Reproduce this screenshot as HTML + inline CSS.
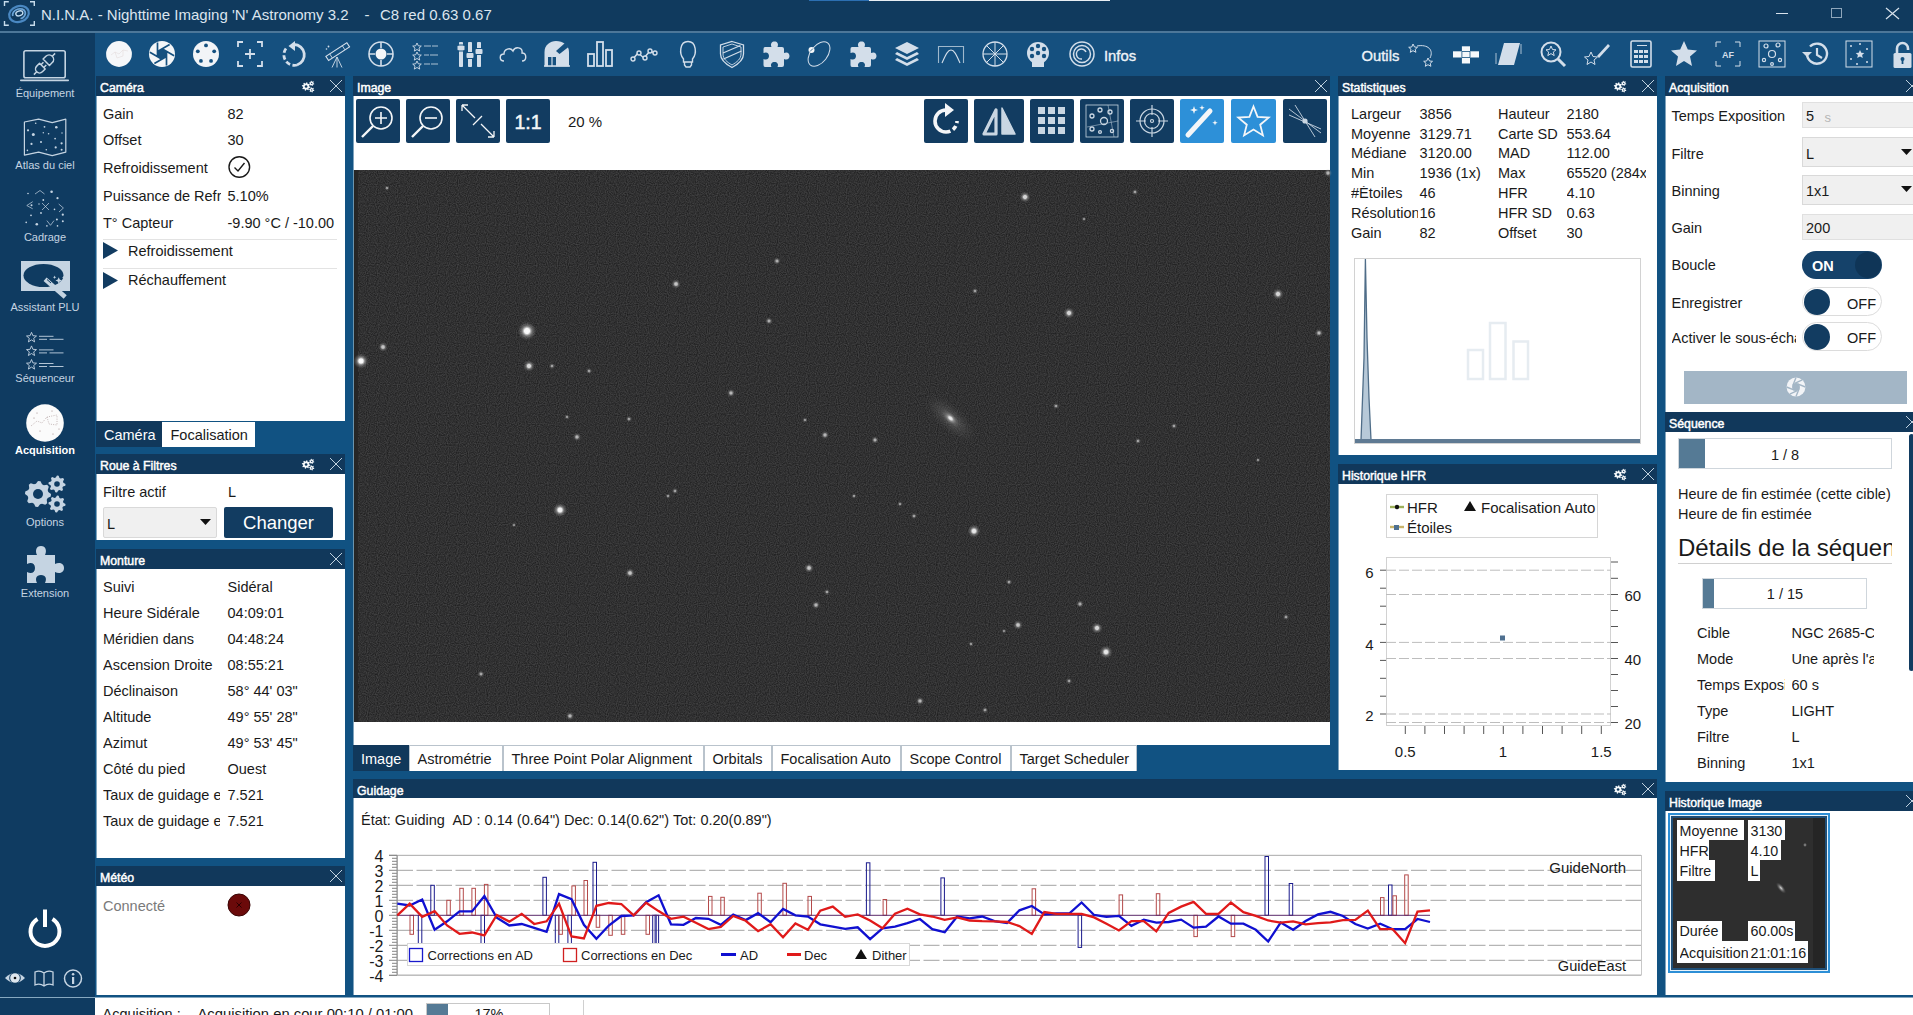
<!DOCTYPE html>
<html><head><meta charset="utf-8">
<style>
html,body{margin:0;padding:0;width:1913px;height:1015px;overflow:hidden;background:#115282;font-family:"Liberation Sans", sans-serif;}
.r{position:absolute;}
.t{position:absolute;white-space:nowrap;line-height:1;}
svg{position:absolute;overflow:visible;}
</style></head><body>
<div class="r" style="left:0px;top:0px;width:1913px;height:32px;background:#103a5e;"></div><div class="r" style="left:0px;top:31px;width:1913px;height:2px;background:#4d7799;"></div><div class="r" style="left:809px;top:0px;width:60px;height:1.2px;background:#2c6fb2;"></div><div class="r" style="left:869px;top:0px;width:241px;height:1.2px;background:#e8eef4;"></div><svg style="left:0px;top:0px" width="40" height="30" viewBox="0 0 40 30">
<path d="M4.5 6 V1.8 H8.8 M30 1.8 H34.3 V6 M34.3 21 V25.3 H30 M8.8 25.3 H4.5 V21" stroke="#c8dcec" stroke-width="1.4" fill="none"/>
<g transform="rotate(-18 19 14)" fill="none">
<ellipse cx="19" cy="14" rx="10" ry="7.8" stroke="#4a88c2" stroke-width="2.2"/>
<path d="M12.5 14 A6.5 5 0 1 1 19 19" stroke="#6aa3d6" stroke-width="1.8"/>
<ellipse cx="19.5" cy="13.5" rx="3.6" ry="2.4" stroke="#c5def2" stroke-width="1.3"/>
</g></svg><div class="t" style="left:41px;top:7.30px;font-size:15px;color:#dce5ee;">N.I.N.A. - Nighttime Imaging 'N' Astronomy 3.2</div><div class="t" style="left:364.5px;top:7.30px;font-size:15px;color:#dce5ee;">-</div><div class="t" style="left:380px;top:7.30px;font-size:15px;color:#dce5ee;">C8 red 0.63 0.67</div><div class="r" style="left:1776px;top:13px;width:12px;height:1px;background:#d8e2ec;"></div><div class="r" style="left:1831px;top:8px;width:11px;height:10px;background:transparent;border:1px solid #8fa6bb;box-sizing:border-box;"></div><svg style="left:1886px;top:8px" width="13" height="11"><path d="M0 0 L13 11 M13 0 L0 11" stroke="#d8e2ec" stroke-width="1.2"/></svg><div class="r" style="left:0px;top:33px;width:95px;height:982px;background:#0f3b61;"></div><svg style="left:20px;top:50px" width="50" height="33" viewBox="0 0 50 33">
<rect x="3.9" y="0.8" width="41.3" height="27" rx="1.8" fill="none" stroke="#c5d4e2" stroke-width="1.6"/>
<rect x="0" y="29.6" width="49" height="1.7" rx="0.8" fill="#c5d4e2"/>
<g transform="translate(24.5 14) rotate(-45)" stroke="#c5d4e2" stroke-width="1.5" fill="none" stroke-linejoin="round">
<path d="M-15 0 H-11 M11 0 H15 M-3 -2 H0.5 M-3 2 H0.5"/>
<path d="M-3 -4 H-7 A4 4 0 0 0 -7 4 H-3 Z"/><path d="M2.5 -4.5 H6.5 A4.5 4.5 0 0 1 6.5 4.5 H2.5 Z"/>
</g></svg><div class="t" style="left:-155px;width:400px;text-align:center;top:88.19px;font-size:11px;color:#c5d4e2;">Équipement</div><svg style="left:15px;top:112px" width="60" height="120" viewBox="0 0 60 120">
<path d="M9.4 10 L23.6 7.1 L37.2 10.6 L50.8 7.1 V40.1 L37.2 43.7 L23.6 40.1 L9.4 43.1 Z" fill="none" stroke="#c5d4e2" stroke-width="1.2" stroke-linejoin="round"/><circle cx="18.3" cy="22.4" r="1.5" fill="#c5d4e2"/><circle cx="41.3" cy="15.3" r="1.3" fill="#c5d4e2"/><circle cx="13" cy="18.3" r="1.1" fill="#c5d4e2"/><circle cx="16.5" cy="31.9" r="1.1" fill="#c5d4e2"/><circle cx="46.6" cy="31.3" r="1.1" fill="#c5d4e2"/><circle cx="40.7" cy="35.4" r="1.1" fill="#c5d4e2"/><circle cx="29.5" cy="14.8" r="0.9" fill="#c5d4e2"/><circle cx="33.6" cy="21.8" r="0.8" fill="#c5d4e2"/><circle cx="26" cy="30.1" r="1.0" fill="#c5d4e2"/><circle cx="31.3" cy="37.8" r="0.8" fill="#c5d4e2"/><circle cx="46.6" cy="37.8" r="1.0" fill="#c5d4e2"/><circle cx="20.7" cy="11.2" r="0.8" fill="#c5d4e2"/><circle cx="12.4" cy="38.4" r="0.8" fill="#c5d4e2"/><circle cx="40.1" cy="26.6" r="0.9" fill="#c5d4e2"/><circle cx="28.3" cy="20.7" r="0.7" fill="#c5d4e2"/><circle cx="47" cy="21" r="0.7" fill="#c5d4e2"/>
<circle cx="36.6" cy="79.7" r="1.3" fill="#c5d4e2"/><circle cx="42.5" cy="86.2" r="1.1" fill="#c5d4e2"/><circle cx="28.3" cy="88" r="0.9" fill="#c5d4e2"/><circle cx="16.5" cy="93.3" r="1.0" fill="#c5d4e2"/><circle cx="39.5" cy="97.4" r="0.8" fill="#c5d4e2"/><circle cx="26" cy="101" r="0.9" fill="#c5d4e2"/><circle cx="47.8" cy="102.7" r="1.1" fill="#c5d4e2"/><circle cx="16" cy="103.3" r="0.9" fill="#c5d4e2"/><circle cx="41.9" cy="107.4" r="1.0" fill="#c5d4e2"/><circle cx="47.8" cy="109.2" r="1.0" fill="#c5d4e2"/><circle cx="11.2" cy="110.4" r="0.8" fill="#c5d4e2"/><circle cx="21.8" cy="112.2" r="1.3" fill="#c5d4e2"/><circle cx="31.9" cy="113.9" r="0.8" fill="#c5d4e2"/><circle cx="42.5" cy="113.9" r="0.8" fill="#c5d4e2"/><circle cx="13" cy="81.5" r="0.8" fill="#c5d4e2"/><circle cx="24" cy="92" r="0.7" fill="#c5d4e2"/>
<path d="M20 82 L25 78.5 L29.5 82 M17.7 89.7 L11.8 93.5 L17.7 96.8 M27 91 L34 98 M34 91 L27 98 M43.7 92 L48.4 96 L44 100 M31.9 108.6 L35.5 113.3 L39 108.6" fill="none" stroke="#c5d4e2" stroke-width="0.7"/>
</svg><div class="t" style="left:-155px;width:400px;text-align:center;top:160.19px;font-size:11px;color:#c5d4e2;">Atlas du ciel</div><div class="t" style="left:-155px;width:400px;text-align:center;top:231.69px;font-size:11px;color:#c5d4e2;">Cadrage</div><svg style="left:21px;top:261px" width="50" height="40" viewBox="0 0 50 40">
<rect x="0" y="0" width="49" height="30" fill="#c5d4e2"/>
<ellipse cx="22.5" cy="14.5" rx="20" ry="11.5" fill="#0f3b61"/>
<path d="M24.1 18.2 L44.2 35.9" stroke="#c5d4e2" stroke-width="4.6"/><path d="M26 18.5 L30 22" stroke="#0f3b61" stroke-width="1"/>
<path d="M37.7 16.2 l1 2.2 l2.2 1 l-2.2 1 l-1 2.2 l-1 -2.2 l-2.2 -1 l2.2 -1 z M43 14.4 l0.6 1.4 l1.4 0.6 l-1.4 0.6 l-0.6 1.4 l-0.6 -1.4 l-1.4 -0.6 l1.4 -0.6z M33.6 14.6 l0.5 1.2 l1.2 0.5 l-1.2 0.5 l-0.5 1.2 l-0.5 -1.2 l-1.2 -0.5 l1.2 -0.5z" fill="#c5d4e2"/>
</svg><div class="t" style="left:-155px;width:400px;text-align:center;top:302.19px;font-size:11px;color:#c5d4e2;">Assistant PLU</div><svg style="left:26px;top:332px" width="40" height="40" viewBox="0 0 40 40"><polygon points="5.5,0.3 6.9,3.7 10.5,4.0 7.7,6.3 8.6,9.9 5.5,7.9 2.4,9.9 3.3,6.3 0.5,4.0 4.1,3.7" fill="none" stroke="#c5d4e2" stroke-width="0.9" stroke-linejoin="round"/><path d="M13 4.3 H27.5 M13 7.3 H21 M23.5 7.3 H37.5" stroke="#c5d4e2" stroke-width="0.9"/><polygon points="5.5,13.9 6.9,17.3 10.5,17.6 7.7,19.9 8.6,23.5 5.5,21.5 2.4,23.5 3.3,19.9 0.5,17.6 4.1,17.3" fill="none" stroke="#c5d4e2" stroke-width="0.9" stroke-linejoin="round"/><path d="M13 17.9 H27.5 M13 20.9 H21 M23.5 20.9 H37.5" stroke="#c5d4e2" stroke-width="0.9"/><polygon points="5.5,27.5 6.9,30.9 10.5,31.2 7.7,33.5 8.6,37.1 5.5,35.1 2.4,37.1 3.3,33.5 0.5,31.2 4.1,30.9" fill="none" stroke="#c5d4e2" stroke-width="0.9" stroke-linejoin="round"/><path d="M13 31.5 H27.5 M13 34.5 H21 M23.5 34.5 H37.5" stroke="#c5d4e2" stroke-width="0.9"/></svg><div class="t" style="left:-155px;width:400px;text-align:center;top:372.69px;font-size:11px;color:#c5d4e2;">Séquenceur</div><svg style="left:26px;top:404px" width="38" height="38" viewBox="0 0 38 38">
<circle cx="19" cy="19" r="18.8" fill="#fbfbfb"/>
<path d="M5 22 L11 17 L16 19 L21 13 L31 11 M21 13 L23 20 L31 21 L31 11" stroke="#a08a8a" stroke-width="0.6" stroke-dasharray="1 1.3" fill="none"/><g fill="#8a7070"><circle cx="11" cy="9" r="0.5"/><circle cx="26" cy="7" r="0.5"/><circle cx="14" cy="27" r="0.5"/><circle cx="27" cy="30" r="0.5"/><circle cx="33" cy="25" r="0.5"/><circle cx="8" cy="14" r="0.5"/></g>
</svg><div class="t" style="left:-155px;width:400px;text-align:center;top:445.19px;font-size:11px;color:#ffffff;font-weight:bold;">Acquisition</div><svg style="left:24px;top:474px" width="44" height="40" viewBox="0 0 44 40"><polygon points="27.00,20.00 26.75,22.54 23.70,24.02 22.73,25.83 23.19,29.19 21.22,30.81 18.02,29.70 16.05,30.30 14.00,33.00 11.46,32.75 9.98,29.70 8.17,28.73 4.81,29.19 3.19,27.22 4.30,24.02 3.70,22.05 1.00,20.00 1.25,17.46 4.30,15.98 5.27,14.17 4.81,10.81 6.78,9.19 9.98,10.30 11.95,9.70 14.00,7.00 16.54,7.25 18.02,10.30 19.83,11.27 23.19,10.81 24.81,12.78 23.70,15.98 24.30,17.95" fill="#c5d4e2"/><circle cx="14" cy="20" r="5" fill="#0f3b61"/><polygon points="41.50,10.00 41.34,11.66 39.01,12.49 38.40,13.61 39.01,16.01 37.72,17.07 35.49,16.01 34.27,16.38 33.00,18.50 31.34,18.34 30.51,16.01 29.39,15.40 26.99,16.01 25.93,14.72 26.99,12.49 26.62,11.27 24.50,10.00 24.66,8.34 26.99,7.51 27.60,6.39 26.99,3.99 28.28,2.93 30.51,3.99 31.73,3.62 33.00,1.50 34.66,1.66 35.49,3.99 36.61,4.60 39.01,3.99 40.07,5.28 39.01,7.51 39.38,8.73" fill="#c5d4e2"/><circle cx="33" cy="10" r="2.8" fill="#0f3b61"/><polygon points="41.50,30.00 41.34,31.66 39.01,32.49 38.40,33.61 39.01,36.01 37.72,37.07 35.49,36.01 34.27,36.38 33.00,38.50 31.34,38.34 30.51,36.01 29.39,35.40 26.99,36.01 25.93,34.72 26.99,32.49 26.62,31.27 24.50,30.00 24.66,28.34 26.99,27.51 27.60,26.39 26.99,23.99 28.28,22.93 30.51,23.99 31.73,23.62 33.00,21.50 34.66,21.66 35.49,23.99 36.61,24.60 39.01,23.99 40.07,25.28 39.01,27.51 39.38,28.73" fill="#c5d4e2"/><circle cx="33" cy="30" r="2.8" fill="#0f3b61"/></svg><div class="t" style="left:-155px;width:400px;text-align:center;top:517.19px;font-size:11px;color:#c5d4e2;">Options</div><svg style="left:25px;top:546px" width="40" height="38" viewBox="0 0 40 38">
<path d="M2 9 H12 C10 5 11 0 16 0 C21 0 22 5 20 9 H30 V18 C34 16 39 17 39 22 C39 27 34 28 30 26 V37 H20 C22 33 21 29 16 29 C11 29 10 33 12 37 H2 V26 C6 28 10 27 10 22 C10 17 6 16 2 18 Z" fill="#c5d4e2"/>
</svg><div class="t" style="left:-155px;width:400px;text-align:center;top:588.19px;font-size:11px;color:#c5d4e2;">Extension</div><svg style="left:26px;top:908px" width="38" height="40" viewBox="0 0 38 40">
<path d="M11.5 11 A14.5 14.5 0 1 0 26.5 11" stroke="#ffffff" stroke-width="4" fill="none"/>
<path d="M19 1.5 V19" stroke="#ffffff" stroke-width="4"/></svg><svg style="left:5px;top:969px" width="80" height="20" viewBox="0 0 80 20">
<path d="M0 9 Q10 -1 20 9 Q10 19 0 9 Z" fill="#c5d4e2"/><circle cx="10" cy="9" r="5.8" fill="#0f3b61"/><circle cx="10" cy="9" r="4.8" fill="#dde6ee"/><circle cx="10" cy="9" r="1.3" fill="#111"/>
<path d="M30 3 Q35 1 39 4 Q43 1 48 3 V16 Q43 14 39 17 Q35 14 30 16 Z M39 4 V17" stroke="#c5d4e2" stroke-width="1.3" fill="none"/>
<circle cx="68" cy="9.5" r="8.5" stroke="#c5d4e2" stroke-width="1.5" fill="none"/><rect x="67" y="8" width="2.2" height="7" fill="#c5d4e2"/><circle cx="68.1" cy="5.3" r="1.3" fill="#c5d4e2"/>
</svg><div class="r" style="left:95px;top:33px;width:1818px;height:43px;background:#15507f;"></div><svg style="left:104.5px;top:39.5px" width="28" height="28" viewBox="0 0 28 28"><circle cx="14" cy="14" r="12.9" fill="#f6f7f9"/><path d="M6 15 L10 12 L14 14 L18 10 L23 11 M10 12 L12 18 L18 16 L18 10" stroke="#e0d6d6" stroke-width="0.5" fill="none"/></svg><svg style="left:148.3px;top:39.5px" width="28" height="28" viewBox="0 0 28 28"><clipPath id="apc"><circle cx="14" cy="14" r="13"/></clipPath><circle cx="14" cy="14" r="13" fill="#f4f6f8"/><polygon points="14.00,8.80 18.50,11.40 18.50,16.60 14.00,19.20 9.50,16.60 9.50,11.40" fill="#15507f"/><path d="M14.00 8.80 L26.12 15.80 M18.50 11.40 L18.50 25.40 M18.50 16.60 L6.38 23.60 M14.00 19.20 L1.88 12.20 M9.50 16.60 L9.50 2.60 M9.50 11.40 L21.62 4.40 " stroke="#15507f" stroke-width="1.7" clip-path="url(#apc)"/></svg><svg style="left:192.1px;top:39.5px" width="28" height="28" viewBox="0 0 28 28"><circle cx="14" cy="14" r="13" fill="#f2f4f7"/><circle cx="14.00" cy="5.40" r="1.9" fill="#15507f"/><circle cx="22.18" cy="11.34" r="1.9" fill="#15507f"/><circle cx="19.05" cy="20.96" r="1.9" fill="#15507f"/><circle cx="8.95" cy="20.96" r="1.9" fill="#15507f"/><circle cx="5.82" cy="11.34" r="1.9" fill="#15507f"/></svg><svg style="left:235.9px;top:39.5px" width="28" height="28" viewBox="0 0 28 28"><path d="M2 7 V2 H7 M21 2 H26 V7 M26 21 V26 H21 M7 26 H2 V21 M14 9 V19 M9 14 H19" stroke="#d3deea" stroke-width="1.8" fill="none"/></svg><svg style="left:279.7px;top:39.5px" width="28" height="28" viewBox="0 0 28 28"><path d="M14 4.5 A10.5 10.5 0 0 1 17 25" stroke="#d3deea" stroke-width="2.8" fill="none"/><path d="M17 25 A10.5 10.5 0 0 1 6 8.5" stroke="#d3deea" stroke-width="2.8" fill="none" stroke-dasharray="4.6 2.4"/><path d="M15 1 L8.5 6 L15 11 Z" fill="#d3deea"/></svg><svg style="left:323.5px;top:39.5px" width="28" height="28" viewBox="0 0 28 28"><g transform="rotate(-33 14 12)"><rect x="1.5" y="9" width="25" height="5" stroke="#d3deea" stroke-width="1.1" fill="none"/><path d="M21 9 V14 M6 9 V14" stroke="#d3deea" stroke-width="0.8"/></g><path d="M13 17 L8 27.5 M13 17 L13 27.5 M13 17 L18 27.5" stroke="#d3deea" stroke-width="0.9"/><circle cx="2.5" cy="9" r="0.8" fill="#d3deea"/><circle cx="4.5" cy="6.5" r="0.9" fill="#d3deea"/></svg><svg style="left:367.3px;top:39.5px" width="28" height="28" viewBox="0 0 28 28"><circle cx="14" cy="14" r="12" stroke="#d3deea" stroke-width="1.6" fill="none"/><circle cx="14" cy="14" r="5.5" fill="#f4f6f8"/><path d="M2 14 H8 M20 14 H26 M14 2 V8 M14 20 V26" stroke="#d3deea" stroke-width="1.6"/></svg><svg style="left:411.1px;top:39.5px" width="28" height="28" viewBox="0 0 28 28"><g stroke="#d3deea" stroke-width="0.9" fill="none"><path d="M5 2 l1.3 2.8 l3 .3 l-2.3 2 l.7 3 l-2.7 -1.6 l-2.7 1.6 l.7 -3 l-2.3 -2 l3 -.3z" transform="translate(1,1)"/><path d="M5 2 l1.3 2.8 l3 .3 l-2.3 2 l.7 3 l-2.7 -1.6 l-2.7 1.6 l.7 -3 l-2.3 -2 l3 -.3z" transform="translate(1,10)"/><path d="M5 2 l1.3 2.8 l3 .3 l-2.3 2 l.7 3 l-2.7 -1.6 l-2.7 1.6 l.7 -3 l-2.3 -2 l3 -.3z" transform="translate(1,19)"/><path d="M13 6 H20 M21 6 H27 M13 15 H18 M19 15 H27 M13 24 H19 M20 24 H27" stroke-width="0.8"/></g></svg><svg style="left:454.9px;top:39.5px" width="28" height="28" viewBox="0 0 28 28"><g fill="#d3deea"><rect x="4" y="2" width="4" height="25" rx="0.8"/><rect x="13" y="2" width="4" height="25" rx="0.8"/><rect x="22" y="2" width="4" height="25" rx="0.8"/><rect x="2.5" y="5.5" width="7" height="5" rx="1"/><rect x="11.5" y="13" width="7" height="5" rx="1"/><rect x="20.5" y="9" width="7" height="5" rx="1"/></g><g fill="#15507f"><rect x="2" y="4.5" width="8" height="1"/><rect x="11" y="12" width="8" height="1"/><rect x="20" y="8" width="8" height="1"/><rect x="2" y="10.5" width="8" height="1"/><rect x="11" y="18" width="8" height="1"/><rect x="20" y="14" width="8" height="1"/></g></svg><svg style="left:498.7px;top:39.5px" width="28" height="28" viewBox="0 0 28 28"><path d="M5 21 C0 21 0 14 5 14 C5 9 11 7 14 11 C16 6 24 7 23 13 C28 13 28 21 23 21" stroke="#d3deea" stroke-width="1.4" fill="none"/></svg><svg style="left:542.5px;top:39.5px" width="28" height="28" viewBox="0 0 28 28"><path d="M1.5 26.5 V12 C1.5 5 7 1 13 1 C20 1 26 5 26 12 V26.5 Z" fill="#d3deea"/><path d="M13 11 L22 3 L25.5 7 L16.5 14 Z" fill="#15507f"/><path d="M5 26.5 V17 H13 V26.5" fill="#15507f"/><path d="M9 17 V26.5" stroke="#d3deea" stroke-width="1.2"/><path d="M1 26 H27" stroke="#d3deea" stroke-width="1.5"/></svg><svg style="left:586.3px;top:39.5px" width="28" height="28" viewBox="0 0 28 28"><g stroke="#d3deea" stroke-width="1.8" fill="none"><rect x="2" y="14" width="6" height="12"/><rect x="11" y="2" width="6" height="24"/><rect x="20" y="10" width="6" height="16"/></g></svg><svg style="left:630.1px;top:39.5px" width="28" height="28" viewBox="0 0 28 28"><path d="M2 20 L8 13 L14 18 L20 11 L26 14" stroke="#d3deea" stroke-width="1.5" fill="none"/><g fill="#15507f" stroke="#d3deea" stroke-width="1.4"><circle cx="3" cy="19" r="2"/><circle cx="9" cy="13" r="2"/><circle cx="15" cy="18" r="2"/><circle cx="20" cy="11" r="2"/><circle cx="25" cy="13" r="2"/></g></svg><svg style="left:673.9px;top:39.5px" width="28" height="28" viewBox="0 0 28 28"><path d="M9.5 19 C5 14 5.5 1.5 14 1.5 C22.5 1.5 23 14 18.5 19 V22 H9.5 Z M9.5 22 H18.5 M10.5 22 V25 L12 27 H16 L17.5 25 V22" stroke="#d3deea" stroke-width="1.4" fill="none"/></svg><svg style="left:717.7px;top:39.5px" width="28" height="28" viewBox="0 0 28 28"><path d="M14 1.5 L25.5 5 V14 C25.5 20 20.5 24 14 27.5 C7.5 24 2.5 20 2.5 14 V5 Z" stroke="#d3deea" stroke-width="1.3" fill="none"/><path d="M14 4 L23 7 V14 C23 19 19 22 14 25 C9 22 5 19 5 14 V7 Z" stroke="#d3deea" stroke-width="0.9" fill="none"/><path d="M5 13 L22.5 5.5 M5.5 19 L23.5 11" stroke="#d3deea" stroke-width="1.2"/></svg><svg style="left:761.5px;top:39.5px" width="28" height="28" viewBox="0 0 28 28"><path d="M3 7 H9.5 C8 3.5 10 1.5 12.5 1.5 C15 1.5 17 3.5 15.5 7 H20 Q22 7 22 9 V13 C25.5 11.5 27.5 13.5 27.5 16 C27.5 18.5 25.5 20.5 22 19 V25 Q22 27 20 27 H15.5 C17 24 15 22 12.5 22 C10 22 8 24 9.5 27 H3 Q1.5 27 1.5 25 V19 C5 20.5 7 18.5 7 16 C7 13.5 5 11.5 1.5 13 V9 Q1.5 7 3 7 Z" fill="#d3deea"/></svg><svg style="left:805.3px;top:39.5px" width="28" height="28" viewBox="0 0 28 28"><ellipse cx="14" cy="14" rx="14" ry="8.5" stroke="#d3deea" stroke-width="1" fill="none" transform="rotate(-52 14 14)"/><circle cx="6.5" cy="10" r="3" fill="#f4f6f8"/><path d="M5 11.5 L8 8.5" stroke="#15507f" stroke-width="0.8"/></svg><svg style="left:849.1px;top:39.5px" width="28" height="28" viewBox="0 0 28 28"><path d="M3 7 H9.5 C8 3.5 10 1.5 12.5 1.5 C15 1.5 17 3.5 15.5 7 H20 Q22 7 22 9 V13 C25.5 11.5 27.5 13.5 27.5 16 C27.5 18.5 25.5 20.5 22 19 V25 Q22 27 20 27 H15.5 C17 24 15 22 12.5 22 C10 22 8 24 9.5 27 H3 Q1.5 27 1.5 25 V19 C5 20.5 7 18.5 7 16 C7 13.5 5 11.5 1.5 13 V9 Q1.5 7 3 7 Z" fill="#d3deea"/></svg><svg style="left:892.9px;top:39.5px" width="28" height="28" viewBox="0 0 28 28"><g fill="#d3deea"><path d="M14 2 L26 8 L14 14 L2 8 Z"/><path d="M4 12 L14 17 L24 12 L26 14 L14 20 L2 14 Z"/><path d="M4 18 L14 23 L24 18 L26 20 L14 26 L2 20 Z"/></g></svg><svg style="left:936.7px;top:39.5px" width="28" height="28" viewBox="0 0 28 28"><path d="M1.5 23 V6.5 H26.5 V23" stroke="#9fb8cc" stroke-width="1.1" fill="none"/><path d="M5 23 C9 14 11 10 14 10 C17 10 19 14 23 23" stroke="#d3deea" stroke-width="1.1" fill="none"/></svg><svg style="left:980.5px;top:39.5px" width="28" height="28" viewBox="0 0 28 28"><circle cx="14" cy="14" r="12" stroke="#d3deea" stroke-width="1.3" fill="none"/><path d="M14 2 V26 M2 14 H26 M5.5 5.5 L22.5 22.5 M22.5 5.5 L5.5 22.5" stroke="#d3deea" stroke-width="1"/></svg><svg style="left:1024.3px;top:39.5px" width="28" height="28" viewBox="0 0 28 28"><circle cx="14" cy="13" r="11" fill="#d3deea"/><rect x="8" y="20" width="12" height="7" fill="#d3deea"/><g fill="#15507f"><circle cx="14" cy="6" r="2.2"/><circle cx="20" cy="9" r="2.2"/><circle cx="20" cy="16" r="2.2"/><circle cx="8" cy="9" r="2.2"/><circle cx="8" cy="16" r="2.2"/><circle cx="14" cy="13" r="2.2"/></g></svg><svg style="left:1068.1px;top:39.5px" width="28" height="28" viewBox="0 0 28 28"><g stroke="#d3deea" stroke-width="1.5" fill="none"><circle cx="14" cy="14" r="12"/><circle cx="14" cy="14" r="8.5"/><path d="M14 19 A5 5 0 1 1 18 12"/></g></svg><svg style="left:1408.0px;top:39.5px" width="28" height="28" viewBox="0 0 28 28"><g stroke="#d3deea" stroke-width="1" fill="none"><path d="M4 3 l1.5 3 l3 .3 l-2.3 2 l.7 3 l-2.9 -1.6 l-2.7 1.6 l.7 -3 l-2.3 -2 l3 -.3z" transform="translate(1,1)"/><path d="M20 18 l1.5 3 l3 .3 l-2.3 2 l.7 3 l-2.9 -1.6 l-2.7 1.6 l.7 -3 l-2.3 -2 l3 -.3z"/><path d="M9 6 C20 4 26 10 22 18"/></g></svg><svg style="left:1451.7px;top:39.5px" width="28" height="28" viewBox="0 0 28 28"><g fill="#f6f8fa"><rect x="9.9" y="6.3" width="8.1" height="17.2"/><rect x="1" y="11.3" width="26" height="6.2"/></g><g fill="#15507f"><rect x="9.9" y="11" width="8.1" height="0.8"/><rect x="9.9" y="17.2" width="8.1" height="0.8"/><rect x="9.5" y="11.3" width="0.8" height="6.2"/><rect x="17.6" y="11.3" width="0.8" height="6.2"/></g></svg><svg style="left:1495.4px;top:39.5px" width="28" height="28" viewBox="0 0 28 28"><path d="M9 3 H25 L19 25 H3 Z" fill="#d3deea"/><path d="M1 13 V24 M26 4 V14" stroke="#d3deea" stroke-width="0.8"/></svg><svg style="left:1539.1px;top:39.5px" width="28" height="28" viewBox="0 0 28 28"><circle cx="12" cy="12" r="9.5" stroke="#d3deea" stroke-width="2" fill="none"/><path d="M19 19 L26 26" stroke="#d3deea" stroke-width="3"/><path d="M12 6 l1.5 3.5 l3.5 .3 l-2.7 2.3 l.9 3.5 l-3.2 -2 l-3.2 2 l.9 -3.5 l-2.7 -2.3 l3.5 -.3z" stroke="#d3deea" stroke-width="1" fill="none"/></svg><svg style="left:1582.8px;top:39.5px" width="28" height="28" viewBox="0 0 28 28"><path d="M14 16 L25 4 L27 6 L16 18 Z" fill="#d3deea"/><path d="M8 12 l2 4.5 l4.5 .5 l-3.5 3 l1 4.5 l-4 -2.5 l-4 2.5 l1 -4.5 l-3.5 -3 l4.5 -.5z" stroke="#d3deea" stroke-width="1" fill="none"/></svg><svg style="left:1626.5px;top:39.5px" width="28" height="28" viewBox="0 0 28 28"><rect x="4" y="1" width="20" height="26" rx="1.5" stroke="#d3deea" stroke-width="1.6" fill="none"/><g fill="#d3deea"><rect x="7" y="10" width="4" height="3"/><rect x="12" y="10" width="4" height="3"/><rect x="17" y="10" width="4" height="3"/><rect x="7" y="15" width="4" height="3"/><rect x="12" y="15" width="4" height="3"/><rect x="17" y="15" width="4" height="3"/><rect x="7" y="20" width="4" height="3"/><rect x="12" y="20" width="4" height="3"/><rect x="17" y="20" width="4" height="3"/><rect x="10" y="5" width="10" height="1"/></g></svg><svg style="left:1670.2px;top:39.5px" width="28" height="28" viewBox="0 0 28 28"><path d="M14 1 L17.8 9.5 L27 10.5 L20 16.5 L22 26 L14 21 L6 26 L8 16.5 L1 10.5 L10.2 9.5 Z" fill="#d3deea"/></svg><svg style="left:1713.9px;top:39.5px" width="28" height="28" viewBox="0 0 28 28"><path d="M2 7 V2 H7 M21 2 H26 V7 M26 21 V26 H21 M7 26 H2 V21" stroke="#d3deea" stroke-width="1" fill="none"/><text x="14" y="17.5" font-size="9" font-weight="bold" text-anchor="middle" fill="#d3deea" font-family="Liberation Sans">AF</text></svg><svg style="left:1757.6px;top:39.5px" width="28" height="28" viewBox="0 0 28 28"><rect x="1" y="1" width="26" height="26" stroke="#d3deea" stroke-width="1" fill="none"/><g stroke="#d3deea" stroke-width="1.2" fill="none"><circle cx="14" cy="14" r="3.5"/><circle cx="8" cy="6" r="2"/><circle cx="20" cy="5" r="2"/><circle cx="22" cy="20" r="1.6"/><circle cx="6" cy="20" r="1.6"/><circle cx="14" cy="24" r="1.4"/></g></svg><svg style="left:1801.3px;top:39.5px" width="28" height="28" viewBox="0 0 28 28"><path d="M6 14 A10 10 0 1 0 9 6.5" stroke="#d3deea" stroke-width="2.4" fill="none"/><path d="M1 12 L6 17 L11 12 Z" fill="#d3deea"/><path d="M16 8 V15 L21 18" stroke="#d3deea" stroke-width="2.2" fill="none"/></svg><svg style="left:1845.0px;top:39.5px" width="28" height="28" viewBox="0 0 28 28"><rect x="1" y="1" width="26" height="26" stroke="#d3deea" stroke-width="1" fill="none"/><g fill="#d3deea"><circle cx="6" cy="6" r="1"/><circle cx="15" cy="4" r="1"/><circle cx="22" cy="9" r="1"/><circle cx="6" cy="19" r="1"/><circle cx="12" cy="24" r="1"/><circle cx="22" cy="22" r="1"/><path d="M15 10 l1.3 2.7 l3 .3 l-2.2 2 l.7 3 l-2.8 -1.6 l-2.8 1.6 l.7 -3 l-2.2 -2 l3 -.3z"/></g></svg><svg style="left:1888.7px;top:39.5px" width="28" height="28" viewBox="0 0 28 28"><path d="M8 13 V8.5 A5.5 5.5 0 0 1 19 8.5 V10" stroke="#d3deea" stroke-width="2.6" fill="none"/><rect x="4.5" y="13" width="18" height="15" rx="1.5" fill="#d3deea"/><circle cx="13.5" cy="19" r="2" fill="#15507f"/><rect x="12.6" y="19" width="1.8" height="5" fill="#15507f"/></svg><div class="t" style="left:1104px;top:48.97px;font-size:14.8px;color:#eef3f8;-webkit-text-stroke:0.35px #eef3f8;">Infos</div><div class="t" style="left:1361.5px;top:48.97px;font-size:14.8px;color:#eef3f8;-webkit-text-stroke:0.35px #eef3f8;">Outils</div><div class="r" style="left:96px;top:76px;width:249px;height:20px;background:#11385b;"></div><div class="t" style="left:100px;top:81.79px;font-size:12.3px;color:#ffffff;-webkit-text-stroke:0.45px #ffffff;">Caméra</div><svg style="left:329.8px;top:80.2px" width="12" height="12"><path d="M0 0 L12 12 M12 0 L0 12" stroke="#c9d9e7" stroke-width="0.95"/></svg><svg style="left:301px;top:81px" width="14" height="12" viewBox="0 0 14 12"><polygon points="9.38,5.92 9.21,6.75 7.83,6.96 7.50,7.47 7.83,8.82 7.13,9.29 6.00,8.47 5.40,8.59 4.68,9.78 3.85,9.61 3.64,8.23 3.13,7.90 1.78,8.23 1.31,7.53 2.13,6.40 2.01,5.80 0.82,5.08 0.99,4.25 2.37,4.04 2.70,3.53 2.37,2.18 3.07,1.71 4.20,2.53 4.80,2.41 5.52,1.22 6.35,1.39 6.56,2.77 7.07,3.10 8.42,2.77 8.89,3.47 8.07,4.60 8.19,5.20" fill="#f4f8fb"/><circle cx="5.1" cy="5.5" r="1.3" fill="#11385b"/><polygon points="13.28,2.74 13.10,3.39 12.13,3.50 11.80,3.83 11.69,4.80 11.04,4.98 10.47,4.18 10.01,4.06 9.12,4.46 8.64,3.98 9.04,3.09 8.92,2.63 8.12,2.06 8.30,1.41 9.27,1.30 9.60,0.97 9.71,-0.00 10.36,-0.18 10.93,0.62 11.39,0.74 12.28,0.34 12.76,0.82 12.36,1.71 12.48,2.17" fill="#f4f8fb"/><circle cx="10.7" cy="2.4" r="0.6" fill="#11385b"/><polygon points="13.28,9.24 13.10,9.89 12.13,10.00 11.80,10.33 11.69,11.30 11.04,11.48 10.47,10.68 10.01,10.56 9.12,10.96 8.64,10.48 9.04,9.59 8.92,9.13 8.12,8.56 8.30,7.91 9.27,7.80 9.60,7.47 9.71,6.50 10.36,6.32 10.93,7.12 11.39,7.24 12.28,6.84 12.76,7.32 12.36,8.21 12.48,8.67" fill="#f4f8fb"/><circle cx="10.7" cy="8.9" r="0.6" fill="#11385b"/></svg><div class="r" style="left:96px;top:96px;width:249px;height:325px;background:#ffffff;"></div><div class="r" style="left:96px;top:96px;width:1px;height:325px;background:#7fa3bd;"></div><div class="t" style="left:103px;top:106.73px;font-size:14.5px;color:#1a1a1a;">Gain</div><div class="t" style="left:227.5px;top:106.73px;font-size:14.5px;color:#1a1a1a;">82</div><div class="t" style="left:103px;top:132.73px;font-size:14.5px;color:#1a1a1a;">Offset</div><div class="t" style="left:227.5px;top:132.73px;font-size:14.5px;color:#1a1a1a;">30</div><div class="t" style="left:103px;top:161.33px;font-size:14.5px;color:#1a1a1a;">Refroidissement</div><svg style="left:228px;top:156px" width="23" height="23"><circle cx="11.3" cy="11" r="10.3" stroke="#1a1a1a" stroke-width="1.4" fill="none"/><path d="M6.5 11.5 L10 15 L16.5 7" stroke="#1a1a1a" stroke-width="1.4" fill="none"/></svg><div class="t" style="left:103px;top:189.43px;font-size:14.5px;color:#1a1a1a;width:118px;overflow:hidden;padding-bottom:4px;">Puissance de Refroidissement</div><div class="t" style="left:227.5px;top:189.43px;font-size:14.5px;color:#1a1a1a;">5.10%</div><div class="t" style="left:103px;top:216.03px;font-size:14.5px;color:#1a1a1a;">T° Capteur</div><div class="t" style="left:227.5px;top:216.03px;font-size:14.5px;color:#1a1a1a;">-9.90 °C / -10.00</div><div class="r" style="left:103px;top:239px;width:234px;height:1px;background:#e3e3e3;"></div><div class="r" style="left:103px;top:268px;width:234px;height:1px;background:#e3e3e3;"></div><svg style="left:103px;top:242px" width="16" height="48"><path d="M0 0 L15 8.5 L0 17 Z M0 30 L15 38.5 L0 47 Z" fill="#123c61"/></svg><div class="t" style="left:128px;top:244.13px;font-size:14.5px;color:#1a1a1a;">Refroidissement</div><div class="t" style="left:128px;top:272.73px;font-size:14.5px;color:#1a1a1a;">Réchauffement</div><div class="r" style="left:96px;top:421px;width:66px;height:26px;background:#11385b;"></div><div class="t" style="left:104px;top:428.23px;font-size:14.5px;color:#ffffff;">Caméra</div><div class="r" style="left:162px;top:422px;width:93px;height:25px;background:#ffffff;"></div><div class="t" style="left:170.5px;top:428.23px;font-size:14.5px;color:#1a1a1a;">Focalisation</div><div class="r" style="left:96px;top:454px;width:249px;height:20px;background:#11385b;"></div><div class="t" style="left:100px;top:459.79px;font-size:12.3px;color:#ffffff;-webkit-text-stroke:0.45px #ffffff;">Roue à Filtres</div><svg style="left:329.8px;top:458.2px" width="12" height="12"><path d="M0 0 L12 12 M12 0 L0 12" stroke="#c9d9e7" stroke-width="0.95"/></svg><svg style="left:301px;top:459px" width="14" height="12" viewBox="0 0 14 12"><polygon points="9.38,5.92 9.21,6.75 7.83,6.96 7.50,7.47 7.83,8.82 7.13,9.29 6.00,8.47 5.40,8.59 4.68,9.78 3.85,9.61 3.64,8.23 3.13,7.90 1.78,8.23 1.31,7.53 2.13,6.40 2.01,5.80 0.82,5.08 0.99,4.25 2.37,4.04 2.70,3.53 2.37,2.18 3.07,1.71 4.20,2.53 4.80,2.41 5.52,1.22 6.35,1.39 6.56,2.77 7.07,3.10 8.42,2.77 8.89,3.47 8.07,4.60 8.19,5.20" fill="#f4f8fb"/><circle cx="5.1" cy="5.5" r="1.3" fill="#11385b"/><polygon points="13.28,2.74 13.10,3.39 12.13,3.50 11.80,3.83 11.69,4.80 11.04,4.98 10.47,4.18 10.01,4.06 9.12,4.46 8.64,3.98 9.04,3.09 8.92,2.63 8.12,2.06 8.30,1.41 9.27,1.30 9.60,0.97 9.71,-0.00 10.36,-0.18 10.93,0.62 11.39,0.74 12.28,0.34 12.76,0.82 12.36,1.71 12.48,2.17" fill="#f4f8fb"/><circle cx="10.7" cy="2.4" r="0.6" fill="#11385b"/><polygon points="13.28,9.24 13.10,9.89 12.13,10.00 11.80,10.33 11.69,11.30 11.04,11.48 10.47,10.68 10.01,10.56 9.12,10.96 8.64,10.48 9.04,9.59 8.92,9.13 8.12,8.56 8.30,7.91 9.27,7.80 9.60,7.47 9.71,6.50 10.36,6.32 10.93,7.12 11.39,7.24 12.28,6.84 12.76,7.32 12.36,8.21 12.48,8.67" fill="#f4f8fb"/><circle cx="10.7" cy="8.9" r="0.6" fill="#11385b"/></svg><div class="r" style="left:96px;top:474px;width:249px;height:66px;background:#ffffff;"></div><div class="r" style="left:96px;top:474px;width:1px;height:66px;background:#7fa3bd;"></div><div class="t" style="left:103px;top:484.73px;font-size:14.5px;color:#1a1a1a;">Filtre actif</div><div class="t" style="left:228px;top:484.73px;font-size:14.5px;color:#1a1a1a;">L</div><div class="r" style="left:103px;top:507px;width:114px;height:31px;background:#f0f0f0;border:1px solid #d9d9d9;box-sizing:border-box;border-radius:2px;"></div><div class="t" style="left:107px;top:516.73px;font-size:14.5px;color:#1a1a1a;">L</div><svg style="left:200px;top:519px" width="12" height="7"><path d="M0 0 H11 L5.5 6 Z" fill="#111"/></svg><div class="r" style="left:224px;top:507px;width:109px;height:31px;background:#123c61;border-radius:2px;"></div><div class="t" style="left:78.5px;width:400px;text-align:center;top:513.84px;font-size:18.5px;color:#ffffff;">Changer</div><div class="r" style="left:96px;top:549px;width:249px;height:20px;background:#11385b;"></div><div class="t" style="left:100px;top:554.79px;font-size:12.3px;color:#ffffff;-webkit-text-stroke:0.45px #ffffff;">Monture</div><svg style="left:329.8px;top:553.2px" width="12" height="12"><path d="M0 0 L12 12 M12 0 L0 12" stroke="#c9d9e7" stroke-width="0.95"/></svg><div class="r" style="left:96px;top:569px;width:249px;height:289px;background:#ffffff;"></div><div class="r" style="left:96px;top:569px;width:1px;height:289px;background:#7fa3bd;"></div><div class="t" style="left:103px;top:579.73px;font-size:14.5px;color:#1a1a1a;width:117px;overflow:hidden;padding-bottom:4px;">Suivi</div><div class="t" style="left:227.5px;top:579.73px;font-size:14.5px;color:#1a1a1a;">Sidéral</div><div class="t" style="left:103px;top:605.73px;font-size:14.5px;color:#1a1a1a;width:117px;overflow:hidden;padding-bottom:4px;">Heure Sidérale</div><div class="t" style="left:227.5px;top:605.73px;font-size:14.5px;color:#1a1a1a;">04:09:01</div><div class="t" style="left:103px;top:631.73px;font-size:14.5px;color:#1a1a1a;width:117px;overflow:hidden;padding-bottom:4px;">Méridien dans</div><div class="t" style="left:227.5px;top:631.73px;font-size:14.5px;color:#1a1a1a;">04:48:24</div><div class="t" style="left:103px;top:657.73px;font-size:14.5px;color:#1a1a1a;width:117px;overflow:hidden;padding-bottom:4px;">Ascension Droite</div><div class="t" style="left:227.5px;top:657.73px;font-size:14.5px;color:#1a1a1a;">08:55:21</div><div class="t" style="left:103px;top:683.73px;font-size:14.5px;color:#1a1a1a;width:117px;overflow:hidden;padding-bottom:4px;">Déclinaison</div><div class="t" style="left:227.5px;top:683.73px;font-size:14.5px;color:#1a1a1a;">58° 44' 03"</div><div class="t" style="left:103px;top:709.73px;font-size:14.5px;color:#1a1a1a;width:117px;overflow:hidden;padding-bottom:4px;">Altitude</div><div class="t" style="left:227.5px;top:709.73px;font-size:14.5px;color:#1a1a1a;">49° 55' 28"</div><div class="t" style="left:103px;top:735.73px;font-size:14.5px;color:#1a1a1a;width:117px;overflow:hidden;padding-bottom:4px;">Azimut</div><div class="t" style="left:227.5px;top:735.73px;font-size:14.5px;color:#1a1a1a;">49° 53' 45"</div><div class="t" style="left:103px;top:761.73px;font-size:14.5px;color:#1a1a1a;width:117px;overflow:hidden;padding-bottom:4px;">Côté du pied</div><div class="t" style="left:227.5px;top:761.73px;font-size:14.5px;color:#1a1a1a;">Ouest</div><div class="t" style="left:103px;top:787.73px;font-size:14.5px;color:#1a1a1a;width:117px;overflow:hidden;padding-bottom:4px;">Taux de guidage en AD</div><div class="t" style="left:227.5px;top:787.73px;font-size:14.5px;color:#1a1a1a;">7.521</div><div class="t" style="left:103px;top:813.73px;font-size:14.5px;color:#1a1a1a;width:117px;overflow:hidden;padding-bottom:4px;">Taux de guidage en Dec</div><div class="t" style="left:227.5px;top:813.73px;font-size:14.5px;color:#1a1a1a;">7.521</div><div class="r" style="left:96px;top:866px;width:249px;height:20px;background:#11385b;"></div><div class="t" style="left:100px;top:871.79px;font-size:12.3px;color:#ffffff;-webkit-text-stroke:0.45px #ffffff;">Météo</div><svg style="left:329.8px;top:870.2px" width="12" height="12"><path d="M0 0 L12 12 M12 0 L0 12" stroke="#c9d9e7" stroke-width="0.95"/></svg><div class="r" style="left:96px;top:886px;width:249px;height:109px;background:#ffffff;"></div><div class="r" style="left:96px;top:886px;width:1px;height:109px;background:#7fa3bd;"></div><div class="t" style="left:103px;top:898.73px;font-size:14.5px;color:#7a7a7a;">Connecté</div><svg style="left:227px;top:893px" width="24" height="24"><circle cx="12" cy="12" r="11" fill="#6b0a0a" stroke="#3a0505" stroke-width="1"/><path d="M9.5 9.5 L14.5 14.5 M14.5 9.5 L9.5 14.5" stroke="#2a0000" stroke-width="1"/></svg><div class="r" style="left:353px;top:76px;width:977px;height:20px;background:#11385b;"></div><div class="t" style="left:357px;top:81.79px;font-size:12.3px;color:#ffffff;-webkit-text-stroke:0.45px #ffffff;">Image</div><svg style="left:1314.8px;top:80.2px" width="12" height="12"><path d="M0 0 L12 12 M12 0 L0 12" stroke="#c9d9e7" stroke-width="0.95"/></svg><div class="r" style="left:353px;top:96px;width:977px;height:649px;background:#ffffff;"></div><div class="r" style="left:353px;top:96px;width:1px;height:649px;background:#7fa3bd;"></div><div class="r" style="left:356px;top:99px;width:44px;height:44px;background:#123c61;border-radius:2px;"></div><svg style="left:356px;top:99px" width="44" height="44" viewBox="0 0 44 44"><circle cx="25" cy="19" r="11" stroke="#f4f6f8" stroke-width="1.6" fill="none"/><path d="M17 27 L6 38" stroke="#f4f6f8" stroke-width="2.4"/><path d="M25 13 V25 M19 19 H31" stroke="#f4f6f8" stroke-width="1.6"/></svg><div class="r" style="left:406px;top:99px;width:44px;height:44px;background:#123c61;border-radius:2px;"></div><svg style="left:406px;top:99px" width="44" height="44" viewBox="0 0 44 44"><circle cx="25" cy="19" r="11" stroke="#f4f6f8" stroke-width="1.6" fill="none"/><path d="M17 27 L6 38" stroke="#f4f6f8" stroke-width="2.4"/><path d="M19 19 H31" stroke="#f4f6f8" stroke-width="1.6"/></svg><div class="r" style="left:456px;top:99px;width:44px;height:44px;background:#123c61;border-radius:2px;"></div><svg style="left:456px;top:99px" width="44" height="44" viewBox="0 0 44 44"><path d="M6 6 L19 19 M25 25 L38 38 M17 26 L26 17 M6 6 H12 M6 6 V12 M38 38 H32 M38 38 V32" stroke="#f4f6f8" stroke-width="1.3" fill="none"/></svg><div class="r" style="left:506px;top:99px;width:44px;height:44px;background:#123c61;border-radius:2px;"></div><svg style="left:506px;top:99px" width="44" height="44" viewBox="0 0 44 44"><text x="22" y="29.5" font-size="19.5" text-anchor="middle" fill="#f4f6f8" stroke="#f4f6f8" stroke-width="0.5" font-family="Liberation Sans">1:1</text></svg><div class="t" style="left:568px;top:114.30px;font-size:15px;color:#1a1a1a;">20 %</div><div class="r" style="left:924px;top:99px;width:44px;height:44px;background:#123c61;border-radius:2px;"></div><svg style="left:924px;top:99px" width="44" height="44" viewBox="0 0 44 44"><path d="M22 11 A11 11 0 1 0 22 33" stroke="#f4f6f8" stroke-width="3.6" fill="none"/><path d="M22 33 A11 11 0 0 0 33 22" stroke="#f4f6f8" stroke-width="3.6" fill="none" stroke-dasharray="4.5 3"/><path d="M21 4 L30 11 L21 18 Z" fill="#f4f6f8"/></svg><div class="r" style="left:974px;top:99px;width:50px;height:44px;background:#123c61;border-radius:2px;"></div><svg style="left:974px;top:99px" width="50" height="44"><path d="M22 11 L22 35 H10 Z" stroke="#c9d6e2" stroke-width="3.2" fill="none" stroke-linejoin="round"/><path d="M28 9 L41 35 H28 Z" fill="#c9d6e2" stroke="#c9d6e2" stroke-width="1.5" stroke-linejoin="round"/></svg><div class="r" style="left:1030px;top:99px;width:44px;height:44px;background:#123c61;border-radius:2px;"></div><svg style="left:1030px;top:99px" width="44" height="44" viewBox="0 0 44 44"><rect x="8" y="8" width="7" height="7" fill="#c9d6e2"/><rect x="8" y="18" width="7" height="7" fill="#c9d6e2"/><rect x="8" y="28" width="7" height="7" fill="#c9d6e2"/><rect x="18" y="8" width="7" height="7" fill="#c9d6e2"/><rect x="18" y="18" width="7" height="7" fill="#c9d6e2"/><rect x="18" y="28" width="7" height="7" fill="#c9d6e2"/><rect x="28" y="8" width="7" height="7" fill="#c9d6e2"/><rect x="28" y="18" width="7" height="7" fill="#c9d6e2"/><rect x="28" y="28" width="7" height="7" fill="#c9d6e2"/></svg><div class="r" style="left:1080px;top:99px;width:44px;height:44px;background:#123c61;border-radius:2px;"></div><svg style="left:1080px;top:99px" width="44" height="44" viewBox="0 0 44 44"><rect x="6" y="6" width="32" height="32" stroke="#c9d6e2" stroke-width="0.8" fill="none"/><g stroke="#c9d6e2" stroke-width="1.3" fill="none"><circle cx="20" cy="11" r="2"/><circle cx="30" cy="13" r="2"/><circle cx="12" cy="17" r="2"/><circle cx="24" cy="22" r="3.5"/><circle cx="12" cy="30" r="2"/><circle cx="20" cy="33" r="1.4"/><circle cx="32" cy="32" r="1.6"/></g><path d="M7 28 L38 22 M28 6 L34 38" stroke="#c9d6e2" stroke-width="0.5"/></svg><div class="r" style="left:1130px;top:99px;width:44px;height:44px;background:#123c61;border-radius:2px;"></div><svg style="left:1130px;top:99px" width="44" height="44" viewBox="0 0 44 44"><g stroke="#c9d6e2" stroke-width="1.2" fill="none"><circle cx="22" cy="22" r="12"/><circle cx="22" cy="22" r="7.5"/><circle cx="22" cy="22" r="1.5"/><path d="M22 6 V16 M22 28 V38 M6 22 H16 M28 22 H38"/></g></svg><div class="r" style="left:1180px;top:99px;width:44px;height:44px;background:#2d90d8;border-radius:2px;"></div><svg style="left:1180px;top:99px" width="44" height="44" viewBox="0 0 44 44"><path d="M8 36 L30 12" stroke="#f4f6f8" stroke-width="5" stroke-linecap="round"/><path d="M14 7 l1 3 l3 1 l-3 1 l-1 3 l-1 -3 l-3 -1 l3 -1z M22 6 l.7 2 l2 .7 l-2 .7 l-.7 2 l-.7 -2 l-2 -.7 l2 -.7z M35 21 l.7 2 l2 .7 l-2 .7 l-.7 2 l-.7 -2 l-2 -.7 l2 -.7z" fill="#f4f6f8"/></svg><div class="r" style="left:1231px;top:99px;width:45px;height:44px;background:#2d90d8;border-radius:2px;"></div><svg style="left:1231px;top:99px" width="45" height="44"><polygon points="22.5,7.5 26.6,17.8 37.7,18.6 29.2,25.7 31.9,36.4 22.5,30.5 13.1,36.4 15.8,25.7 7.3,18.6 18.4,17.8" stroke="#f4f6f8" stroke-width="1.8" fill="none"/></svg><div class="r" style="left:1283px;top:99px;width:44px;height:44px;background:#123c61;border-radius:2px;"></div><svg style="left:1283px;top:99px" width="44" height="44" viewBox="0 0 44 44"><g stroke="#c9d6e2" stroke-width="0.9"><path d="M6 10 L38 34 M12 6 L32 38 M6 16 L38 30"/></g><circle cx="22" cy="22" r="2.6" fill="#c9d6e2"/></svg><svg style="left:353px;top:170px" width="977" height="552" viewBox="0 0 977 552"><defs><radialGradient id="sg"><stop offset="0" stop-color="#ffffff"/><stop offset="0.28" stop-color="#f6f6f6"/><stop offset="0.55" stop-color="#bbbbbb" stop-opacity="0.45"/><stop offset="1" stop-color="#888888" stop-opacity="0"/></radialGradient><radialGradient id="gg"><stop offset="0" stop-color="#bdbdbd"/><stop offset="0.35" stop-color="#7a7a7a" stop-opacity="0.6"/><stop offset="1" stop-color="#555" stop-opacity="0"/></radialGradient><filter id="nz" x="0" y="0" width="100%" height="100%" color-interpolation-filters="sRGB"><feTurbulence type="fractalNoise" baseFrequency="0.9" numOctaves="1" seed="3"/><feColorMatrix values="0.24 0 0 0 0.072  0.24 0 0 0 0.072  0.24 0 0 0 0.075  0 0 0 0 1"/></filter></defs><rect x="0" y="0" width="977" height="552" fill="#2c2c2c"/><rect x="0" y="0" width="977" height="552" filter="url(#nz)"/><rect x="1" y="0" width="4" height="552" fill="#262626"/><rect x="0" y="0" width="1" height="552" fill="#6a94ad"/><circle cx="174" cy="161" r="9.3" fill="url(#sg)" opacity="1.00"/><circle cx="8" cy="191" r="7.6" fill="url(#sg)" opacity="1.00"/><circle cx="30" cy="177" r="4.8" fill="url(#sg)" opacity="0.73"/><circle cx="176" cy="196" r="5.8" fill="url(#sg)" opacity="0.83"/><circle cx="199" cy="196" r="3.1" fill="url(#sg)" opacity="0.56"/><circle cx="236" cy="201" r="3.1" fill="url(#sg)" opacity="0.56"/><circle cx="323" cy="114" r="4.8" fill="url(#sg)" opacity="0.73"/><circle cx="424" cy="91" r="3.7" fill="url(#sg)" opacity="0.62"/><circle cx="416" cy="151" r="3.7" fill="url(#sg)" opacity="0.62"/><circle cx="378" cy="223" r="4.1" fill="url(#sg)" opacity="0.66"/><circle cx="224" cy="267" r="4.1" fill="url(#sg)" opacity="0.66"/><circle cx="276" cy="249" r="3.1" fill="url(#sg)" opacity="0.56"/><circle cx="214" cy="247" r="2.7" fill="url(#sg)" opacity="0.52"/><circle cx="472" cy="265" r="4.1" fill="url(#sg)" opacity="0.66"/><circle cx="452" cy="250" r="2.7" fill="url(#sg)" opacity="0.52"/><circle cx="34" cy="18" r="2.7" fill="url(#sg)" opacity="0.52"/><circle cx="672" cy="27" r="5.6" fill="url(#sg)" opacity="0.81"/><circle cx="782" cy="22" r="3.1" fill="url(#sg)" opacity="0.56"/><circle cx="716" cy="143" r="5.6" fill="url(#sg)" opacity="0.81"/><circle cx="925" cy="124" r="5.6" fill="url(#sg)" opacity="0.81"/><circle cx="966" cy="163" r="4.1" fill="url(#sg)" opacity="0.66"/><circle cx="622" cy="121" r="3.1" fill="url(#sg)" opacity="0.56"/><circle cx="975" cy="3" r="4.1" fill="url(#sg)" opacity="0.66"/><circle cx="522" cy="270" r="3.7" fill="url(#sg)" opacity="0.62"/><circle cx="703" cy="236" r="3.1" fill="url(#sg)" opacity="0.56"/><circle cx="821" cy="256" r="3.1" fill="url(#sg)" opacity="0.56"/><circle cx="785" cy="271" r="3.1" fill="url(#sg)" opacity="0.56"/><circle cx="731" cy="49" r="2.4" fill="url(#sg)" opacity="0.49"/><circle cx="207" cy="340" r="7.1" fill="url(#sg)" opacity="0.96"/><circle cx="277" cy="403" r="4.8" fill="url(#sg)" opacity="0.73"/><circle cx="322" cy="321" r="3.1" fill="url(#sg)" opacity="0.56"/><circle cx="315" cy="326" r="2.7" fill="url(#sg)" opacity="0.52"/><circle cx="456" cy="398" r="4.8" fill="url(#sg)" opacity="0.73"/><circle cx="474" cy="422" r="3.1" fill="url(#sg)" opacity="0.56"/><circle cx="463" cy="435" r="4.1" fill="url(#sg)" opacity="0.66"/><circle cx="128" cy="504" r="3.4" fill="url(#sg)" opacity="0.59"/><circle cx="217" cy="546" r="4.1" fill="url(#sg)" opacity="0.66"/><circle cx="161" cy="355" r="2.4" fill="url(#sg)" opacity="0.49"/><circle cx="621" cy="361" r="6.5" fill="url(#sg)" opacity="0.90"/><circle cx="656" cy="412" r="3.1" fill="url(#sg)" opacity="0.56"/><circle cx="727" cy="434" r="3.7" fill="url(#sg)" opacity="0.62"/><circle cx="665" cy="455" r="4.8" fill="url(#sg)" opacity="0.73"/><circle cx="744" cy="458" r="5.6" fill="url(#sg)" opacity="0.81"/><circle cx="753" cy="482" r="6.5" fill="url(#sg)" opacity="0.90"/><circle cx="618" cy="474" r="2.7" fill="url(#sg)" opacity="0.52"/><circle cx="716" cy="511" r="3.1" fill="url(#sg)" opacity="0.56"/><circle cx="567" cy="531" r="4.1" fill="url(#sg)" opacity="0.66"/><circle cx="632" cy="540" r="3.1" fill="url(#sg)" opacity="0.56"/><circle cx="933" cy="447" r="3.1" fill="url(#sg)" opacity="0.56"/><circle cx="501" cy="326" r="2.7" fill="url(#sg)" opacity="0.52"/><circle cx="547" cy="334" r="2.7" fill="url(#sg)" opacity="0.52"/><circle cx="561" cy="346" r="3.1" fill="url(#sg)" opacity="0.56"/><circle cx="905" cy="290" r="2.4" fill="url(#sg)" opacity="0.49"/><circle cx="651" cy="461" r="2.4" fill="url(#sg)" opacity="0.49"/><ellipse cx="597.5" cy="248.3" rx="32" ry="13" fill="url(#gg)" opacity="0.55" transform="rotate(42 597.5 248.3)"/><ellipse cx="597.5" cy="248.3" rx="12" ry="5.5" fill="url(#gg)" opacity="0.9" transform="rotate(42 597.5 248.3)"/><ellipse cx="597.5" cy="248.3" rx="7" ry="4.2" fill="url(#sg)" opacity="0.8" transform="rotate(42 597.5 248.3)"/></svg><div class="r" style="left:353px;top:745px;width:977px;height:26px;background:#115282;"></div><div class="r" style="left:353px;top:745px;width:56px;height:26px;background:#11385b;"></div><div class="t" style="left:361px;top:751.73px;font-size:14.5px;color:#ffffff;">Image</div><div class="r" style="left:409px;top:745px;width:94px;height:26px;background:#ffffff;border:1px solid #b9c3cc;border-bottom:none;box-sizing:border-box;"></div><div class="t" style="left:417.5px;top:751.73px;font-size:14.5px;color:#1a1a1a;">Astrométrie</div><div class="r" style="left:503px;top:745px;width:201px;height:26px;background:#ffffff;border:1px solid #b9c3cc;border-bottom:none;box-sizing:border-box;"></div><div class="t" style="left:511.5px;top:751.73px;font-size:14.5px;color:#1a1a1a;">Three Point Polar Alignment</div><div class="r" style="left:704px;top:745px;width:68px;height:26px;background:#ffffff;border:1px solid #b9c3cc;border-bottom:none;box-sizing:border-box;"></div><div class="t" style="left:712.5px;top:751.73px;font-size:14.5px;color:#1a1a1a;">Orbitals</div><div class="r" style="left:772px;top:745px;width:129px;height:26px;background:#ffffff;border:1px solid #b9c3cc;border-bottom:none;box-sizing:border-box;"></div><div class="t" style="left:780.5px;top:751.73px;font-size:14.5px;color:#1a1a1a;">Focalisation Auto</div><div class="r" style="left:901px;top:745px;width:110px;height:26px;background:#ffffff;border:1px solid #b9c3cc;border-bottom:none;box-sizing:border-box;"></div><div class="t" style="left:909.5px;top:751.73px;font-size:14.5px;color:#1a1a1a;">Scope Control</div><div class="r" style="left:1011px;top:745px;width:126px;height:26px;background:#ffffff;border:1px solid #b9c3cc;border-bottom:none;box-sizing:border-box;"></div><div class="t" style="left:1019.5px;top:751.73px;font-size:14.5px;color:#1a1a1a;">Target Scheduler</div><div class="r" style="left:1338px;top:76px;width:319px;height:20px;background:#11385b;"></div><div class="t" style="left:1342px;top:81.79px;font-size:12.3px;color:#ffffff;-webkit-text-stroke:0.45px #ffffff;">Statistiques</div><svg style="left:1641.8px;top:80.2px" width="12" height="12"><path d="M0 0 L12 12 M12 0 L0 12" stroke="#c9d9e7" stroke-width="0.95"/></svg><svg style="left:1613px;top:81px" width="14" height="12" viewBox="0 0 14 12"><polygon points="9.38,5.92 9.21,6.75 7.83,6.96 7.50,7.47 7.83,8.82 7.13,9.29 6.00,8.47 5.40,8.59 4.68,9.78 3.85,9.61 3.64,8.23 3.13,7.90 1.78,8.23 1.31,7.53 2.13,6.40 2.01,5.80 0.82,5.08 0.99,4.25 2.37,4.04 2.70,3.53 2.37,2.18 3.07,1.71 4.20,2.53 4.80,2.41 5.52,1.22 6.35,1.39 6.56,2.77 7.07,3.10 8.42,2.77 8.89,3.47 8.07,4.60 8.19,5.20" fill="#f4f8fb"/><circle cx="5.1" cy="5.5" r="1.3" fill="#11385b"/><polygon points="13.28,2.74 13.10,3.39 12.13,3.50 11.80,3.83 11.69,4.80 11.04,4.98 10.47,4.18 10.01,4.06 9.12,4.46 8.64,3.98 9.04,3.09 8.92,2.63 8.12,2.06 8.30,1.41 9.27,1.30 9.60,0.97 9.71,-0.00 10.36,-0.18 10.93,0.62 11.39,0.74 12.28,0.34 12.76,0.82 12.36,1.71 12.48,2.17" fill="#f4f8fb"/><circle cx="10.7" cy="2.4" r="0.6" fill="#11385b"/><polygon points="13.28,9.24 13.10,9.89 12.13,10.00 11.80,10.33 11.69,11.30 11.04,11.48 10.47,10.68 10.01,10.56 9.12,10.96 8.64,10.48 9.04,9.59 8.92,9.13 8.12,8.56 8.30,7.91 9.27,7.80 9.60,7.47 9.71,6.50 10.36,6.32 10.93,7.12 11.39,7.24 12.28,6.84 12.76,7.32 12.36,8.21 12.48,8.67" fill="#f4f8fb"/><circle cx="10.7" cy="8.9" r="0.6" fill="#11385b"/></svg><div class="r" style="left:1338px;top:96px;width:319px;height:359px;background:#ffffff;"></div><div class="r" style="left:1338px;top:96px;width:1px;height:359px;background:#7fa3bd;"></div><div class="t" style="left:1351px;top:106.73px;font-size:14.5px;color:#1a1a1a;width:67px;overflow:hidden;padding-bottom:4px;">Largeur</div><div class="t" style="left:1419.5px;top:106.73px;font-size:14.5px;color:#1a1a1a;">3856</div><div class="t" style="left:1498px;top:106.73px;font-size:14.5px;color:#1a1a1a;">Hauteur</div><div class="t" style="left:1566.5px;top:106.73px;font-size:14.5px;color:#1a1a1a;width:79px;overflow:hidden;padding-bottom:4px;">2180</div><div class="t" style="left:1351px;top:126.53px;font-size:14.5px;color:#1a1a1a;width:67px;overflow:hidden;padding-bottom:4px;">Moyenne</div><div class="t" style="left:1419.5px;top:126.53px;font-size:14.5px;color:#1a1a1a;">3129.71</div><div class="t" style="left:1498px;top:126.53px;font-size:14.5px;color:#1a1a1a;">Carte SD</div><div class="t" style="left:1566.5px;top:126.53px;font-size:14.5px;color:#1a1a1a;width:79px;overflow:hidden;padding-bottom:4px;">553.64</div><div class="t" style="left:1351px;top:146.33px;font-size:14.5px;color:#1a1a1a;width:67px;overflow:hidden;padding-bottom:4px;">Médiane</div><div class="t" style="left:1419.5px;top:146.33px;font-size:14.5px;color:#1a1a1a;">3120.00</div><div class="t" style="left:1498px;top:146.33px;font-size:14.5px;color:#1a1a1a;">MAD</div><div class="t" style="left:1566.5px;top:146.33px;font-size:14.5px;color:#1a1a1a;width:79px;overflow:hidden;padding-bottom:4px;">112.00</div><div class="t" style="left:1351px;top:166.13px;font-size:14.5px;color:#1a1a1a;width:67px;overflow:hidden;padding-bottom:4px;">Min</div><div class="t" style="left:1419.5px;top:166.13px;font-size:14.5px;color:#1a1a1a;">1936 (1x)</div><div class="t" style="left:1498px;top:166.13px;font-size:14.5px;color:#1a1a1a;">Max</div><div class="t" style="left:1566.5px;top:166.13px;font-size:14.5px;color:#1a1a1a;width:79px;overflow:hidden;padding-bottom:4px;">65520 (284x)</div><div class="t" style="left:1351px;top:185.93px;font-size:14.5px;color:#1a1a1a;width:67px;overflow:hidden;padding-bottom:4px;">#Étoiles</div><div class="t" style="left:1419.5px;top:185.93px;font-size:14.5px;color:#1a1a1a;">46</div><div class="t" style="left:1498px;top:185.93px;font-size:14.5px;color:#1a1a1a;">HFR</div><div class="t" style="left:1566.5px;top:185.93px;font-size:14.5px;color:#1a1a1a;width:79px;overflow:hidden;padding-bottom:4px;">4.10</div><div class="t" style="left:1351px;top:205.73px;font-size:14.5px;color:#1a1a1a;width:67px;overflow:hidden;padding-bottom:4px;">Résolution</div><div class="t" style="left:1419.5px;top:205.73px;font-size:14.5px;color:#1a1a1a;">16</div><div class="t" style="left:1498px;top:205.73px;font-size:14.5px;color:#1a1a1a;">HFR SD</div><div class="t" style="left:1566.5px;top:205.73px;font-size:14.5px;color:#1a1a1a;width:79px;overflow:hidden;padding-bottom:4px;">0.63</div><div class="t" style="left:1351px;top:225.53px;font-size:14.5px;color:#1a1a1a;width:67px;overflow:hidden;padding-bottom:4px;">Gain</div><div class="t" style="left:1419.5px;top:225.53px;font-size:14.5px;color:#1a1a1a;">82</div><div class="t" style="left:1498px;top:225.53px;font-size:14.5px;color:#1a1a1a;">Offset</div><div class="t" style="left:1566.5px;top:225.53px;font-size:14.5px;color:#1a1a1a;width:79px;overflow:hidden;padding-bottom:4px;">30</div><div class="r" style="left:1354px;top:258px;width:287px;height:186px;background:#ffffff;border:1px solid #d2d2d2;box-sizing:border-box;"></div><svg style="left:1354px;top:258px" width="287" height="186" viewBox="0 0 287 186">
<path d="M7 182 L10 100 L11.4 1 L13 80 L15 140 L17 182 Z" fill="#b7c9d8" stroke="#4f6d88" stroke-width="1.3"/>
<rect x="1" y="181" width="285" height="4" fill="#5f7a93"/>
<g stroke="#e6ecf1" stroke-width="2.5" fill="none"><rect x="114" y="92" width="15" height="29"/><rect x="136" y="65" width="15.5" height="56"/><rect x="159.5" y="83.5" width="14.5" height="37.5"/></g>
</svg><div class="r" style="left:1338px;top:464px;width:319px;height:20px;background:#11385b;"></div><div class="t" style="left:1342px;top:469.79px;font-size:12.3px;color:#ffffff;-webkit-text-stroke:0.45px #ffffff;">Historique HFR</div><svg style="left:1641.8px;top:468.2px" width="12" height="12"><path d="M0 0 L12 12 M12 0 L0 12" stroke="#c9d9e7" stroke-width="0.95"/></svg><svg style="left:1613px;top:469px" width="14" height="12" viewBox="0 0 14 12"><polygon points="9.38,5.92 9.21,6.75 7.83,6.96 7.50,7.47 7.83,8.82 7.13,9.29 6.00,8.47 5.40,8.59 4.68,9.78 3.85,9.61 3.64,8.23 3.13,7.90 1.78,8.23 1.31,7.53 2.13,6.40 2.01,5.80 0.82,5.08 0.99,4.25 2.37,4.04 2.70,3.53 2.37,2.18 3.07,1.71 4.20,2.53 4.80,2.41 5.52,1.22 6.35,1.39 6.56,2.77 7.07,3.10 8.42,2.77 8.89,3.47 8.07,4.60 8.19,5.20" fill="#f4f8fb"/><circle cx="5.1" cy="5.5" r="1.3" fill="#11385b"/><polygon points="13.28,2.74 13.10,3.39 12.13,3.50 11.80,3.83 11.69,4.80 11.04,4.98 10.47,4.18 10.01,4.06 9.12,4.46 8.64,3.98 9.04,3.09 8.92,2.63 8.12,2.06 8.30,1.41 9.27,1.30 9.60,0.97 9.71,-0.00 10.36,-0.18 10.93,0.62 11.39,0.74 12.28,0.34 12.76,0.82 12.36,1.71 12.48,2.17" fill="#f4f8fb"/><circle cx="10.7" cy="2.4" r="0.6" fill="#11385b"/><polygon points="13.28,9.24 13.10,9.89 12.13,10.00 11.80,10.33 11.69,11.30 11.04,11.48 10.47,10.68 10.01,10.56 9.12,10.96 8.64,10.48 9.04,9.59 8.92,9.13 8.12,8.56 8.30,7.91 9.27,7.80 9.60,7.47 9.71,6.50 10.36,6.32 10.93,7.12 11.39,7.24 12.28,6.84 12.76,7.32 12.36,8.21 12.48,8.67" fill="#f4f8fb"/><circle cx="10.7" cy="8.9" r="0.6" fill="#11385b"/></svg><div class="r" style="left:1338px;top:484px;width:319px;height:286px;background:#ffffff;"></div><div class="r" style="left:1338px;top:484px;width:1px;height:286px;background:#7fa3bd;"></div><div class="r" style="left:1386px;top:494px;width:212px;height:44px;background:#ffffff;border:1px solid #d6d6d6;box-sizing:border-box;"></div><svg style="left:1388px;top:500px" width="20" height="36"><path d="M2 7 H16" stroke="#9db05a" stroke-width="2.4"/><circle cx="9" cy="7" r="2.2" fill="#111"/><path d="M2 27 H16" stroke="#c9b46a" stroke-width="2.4"/><rect x="6" y="25" width="5" height="5" fill="#4f7090"/></svg><div class="t" style="left:1407px;top:500.30px;font-size:15px;color:#1a1a1a;">HFR</div><svg style="left:1464px;top:501px" width="12" height="10"><path d="M0 10 L6 0 L12 10 Z" fill="#111"/></svg><div class="t" style="left:1481px;top:500.30px;font-size:15px;color:#1a1a1a;">Focalisation Auto</div><div class="t" style="left:1407px;top:520.30px;font-size:15px;color:#1a1a1a;">Étoiles</div><div class="r" style="left:1386px;top:557px;width:225px;height:169px;background:transparent;border:1px solid #d2d2d2;box-sizing:border-box;"></div><svg style="left:0px;top:0px" width="1913" height="1015" viewBox="0 0 1913 1015"><path d="M1386 570.2 H1611" stroke="#bdbdbd" stroke-width="1" stroke-dasharray="10 3"/><path d="M1386 594.5 H1611" stroke="#bdbdbd" stroke-width="1" stroke-dasharray="10 3"/><path d="M1386 642.4 H1611" stroke="#bdbdbd" stroke-width="1" stroke-dasharray="10 3"/><path d="M1386 658.5 H1611" stroke="#bdbdbd" stroke-width="1" stroke-dasharray="10 3"/><path d="M1386 714 H1611" stroke="#bdbdbd" stroke-width="1" stroke-dasharray="10 3"/><path d="M1386 722.5 H1611" stroke="#bdbdbd" stroke-width="1" stroke-dasharray="10 3"/><path d="M1380 570.2 H1386" stroke="#555" stroke-width="1"/><path d="M1380 588.2 H1386" stroke="#555" stroke-width="1"/><path d="M1380 606.2 H1386" stroke="#555" stroke-width="1"/><path d="M1380 624.3 H1386" stroke="#555" stroke-width="1"/><path d="M1380 642.4 H1386" stroke="#555" stroke-width="1"/><path d="M1380 660.4 H1386" stroke="#555" stroke-width="1"/><path d="M1380 678.3 H1386" stroke="#555" stroke-width="1"/><path d="M1380 696.2 H1386" stroke="#555" stroke-width="1"/><path d="M1380 714 H1386" stroke="#555" stroke-width="1"/><path d="M1611 562 H1618" stroke="#555" stroke-width="1"/><path d="M1611 578.3 H1618" stroke="#555" stroke-width="1"/><path d="M1611 594.5 H1618" stroke="#555" stroke-width="1"/><path d="M1611 610.5 H1618" stroke="#555" stroke-width="1"/><path d="M1611 626.5 H1618" stroke="#555" stroke-width="1"/><path d="M1611 642.5 H1618" stroke="#555" stroke-width="1"/><path d="M1611 658.5 H1618" stroke="#555" stroke-width="1"/><path d="M1611 674.5 H1618" stroke="#555" stroke-width="1"/><path d="M1611 690.5 H1618" stroke="#555" stroke-width="1"/><path d="M1611 706.5 H1618" stroke="#555" stroke-width="1"/><path d="M1611 722.5 H1618" stroke="#555" stroke-width="1"/><path d="M1405.3 726 V734" stroke="#555" stroke-width="1"/><path d="M1424.9 726 V734" stroke="#555" stroke-width="1"/><path d="M1444.5 726 V734" stroke="#555" stroke-width="1"/><path d="M1464.1 726 V734" stroke="#555" stroke-width="1"/><path d="M1483.7 726 V734" stroke="#555" stroke-width="1"/><path d="M1503.3 726 V734" stroke="#555" stroke-width="1"/><path d="M1522.9 726 V734" stroke="#555" stroke-width="1"/><path d="M1542.5 726 V734" stroke="#555" stroke-width="1"/><path d="M1562.1 726 V734" stroke="#555" stroke-width="1"/><path d="M1581.7 726 V734" stroke="#555" stroke-width="1"/><path d="M1601.3 726 V734" stroke="#555" stroke-width="1"/><rect x="1500" y="635.5" width="5" height="5" fill="#4f7090"/></svg><div class="t" style="right:539.5px;top:564.80px;font-size:15px;color:#1a1a1a;">6</div><div class="t" style="right:539.5px;top:636.80px;font-size:15px;color:#1a1a1a;">4</div><div class="t" style="right:539.5px;top:708.30px;font-size:15px;color:#1a1a1a;">2</div><div class="t" style="left:1624.5px;top:587.80px;font-size:15px;color:#1a1a1a;">60</div><div class="t" style="left:1624.5px;top:651.80px;font-size:15px;color:#1a1a1a;">40</div><div class="t" style="left:1624.5px;top:715.80px;font-size:15px;color:#1a1a1a;">20</div><div class="t" style="left:1205.3px;width:400px;text-align:center;top:743.80px;font-size:15px;color:#1a1a1a;">0.5</div><div class="t" style="left:1303px;width:400px;text-align:center;top:743.80px;font-size:15px;color:#1a1a1a;">1</div><div class="t" style="left:1401.3px;width:400px;text-align:center;top:743.80px;font-size:15px;color:#1a1a1a;">1.5</div><div class="r" style="left:1665px;top:76px;width:256px;height:20px;background:#11385b;"></div><div class="t" style="left:1669px;top:81.79px;font-size:12.3px;color:#ffffff;-webkit-text-stroke:0.45px #ffffff;">Acquisition</div><svg style="left:1905.8px;top:80.2px" width="12" height="12"><path d="M0 0 L12 12 M12 0 L0 12" stroke="#c9d9e7" stroke-width="0.95"/></svg><div class="r" style="left:1665px;top:96px;width:256px;height:329px;background:#ffffff;"></div><div class="r" style="left:1665px;top:96px;width:1px;height:329px;background:#7fa3bd;"></div><div class="t" style="left:1671.5px;top:109.23px;font-size:14.5px;color:#1a1a1a;">Temps Exposition</div><div class="r" style="left:1802px;top:102px;width:111px;height:26px;background:#f0f0f0;border:1px solid #e0e0e0;border-right:none;box-sizing:border-box;"></div><div class="t" style="left:1806px;top:109.23px;font-size:14.5px;color:#1a1a1a;">5</div><div class="t" style="left:1824.5px;top:111.00px;font-size:13px;color:#b5b5b5;">s</div><div class="t" style="left:1671.5px;top:146.73px;font-size:14.5px;color:#1a1a1a;">Filtre</div><div class="r" style="left:1802px;top:137px;width:111px;height:30px;background:#f0f0f0;border:1px solid #d9d9d9;border-right:none;box-sizing:border-box;"></div><div class="t" style="left:1806px;top:146.73px;font-size:14.5px;color:#1a1a1a;">L</div><svg style="left:1901px;top:149px" width="12" height="7"><path d="M0 0 H11 L5.5 6 Z" fill="#111"/></svg><div class="t" style="left:1671.5px;top:183.73px;font-size:14.5px;color:#1a1a1a;">Binning</div><div class="r" style="left:1802px;top:175px;width:111px;height:30px;background:#f0f0f0;border:1px solid #d9d9d9;border-right:none;box-sizing:border-box;"></div><div class="t" style="left:1806px;top:184.23px;font-size:14.5px;color:#1a1a1a;">1x1</div><svg style="left:1901px;top:186px" width="12" height="7"><path d="M0 0 H11 L5.5 6 Z" fill="#111"/></svg><div class="t" style="left:1671.5px;top:221.23px;font-size:14.5px;color:#1a1a1a;">Gain</div><div class="r" style="left:1802px;top:214px;width:111px;height:26px;background:#f0f0f0;border:1px solid #e0e0e0;border-right:none;box-sizing:border-box;"></div><div class="t" style="left:1806px;top:220.73px;font-size:14.5px;color:#1a1a1a;">200</div><div class="t" style="left:1671.5px;top:258.23px;font-size:14.5px;color:#1a1a1a;">Boucle</div><div class="r" style="left:1802px;top:251px;width:80px;height:28px;border-radius:14px;background:#15426a;"></div><div class="r" style="left:1855px;top:252px;width:26px;height:26px;border-radius:13px;background:#0f3557;"></div><div class="t" style="left:1812px;top:258.73px;font-size:14.5px;color:#ffffff;font-weight:bold;">ON</div><div class="t" style="left:1671.5px;top:296.33px;font-size:14.5px;color:#1a1a1a;width:124px;overflow:hidden;padding-bottom:4px;">Enregistrer</div><div class="r" style="left:1802px;top:287px;width:80px;height:29px;border-radius:14.5px;background:#fff;border:1px solid #dcdcdc;box-sizing:border-box;"></div><div class="r" style="left:1804px;top:289px;width:26px;height:26px;border-radius:13px;background:#123c61;"></div><div class="t" style="left:1847px;top:296.83px;font-size:14.5px;color:#1a1a1a;">OFF</div><div class="t" style="left:1671.5px;top:330.73px;font-size:14.5px;color:#1a1a1a;width:124px;overflow:hidden;padding-bottom:4px;">Activer le sous-échantillonnage</div><div class="r" style="left:1802px;top:322px;width:80px;height:29px;border-radius:14.5px;background:#fff;border:1px solid #dcdcdc;box-sizing:border-box;"></div><div class="r" style="left:1804px;top:324px;width:26px;height:26px;border-radius:13px;background:#123c61;"></div><div class="t" style="left:1847px;top:331.23px;font-size:14.5px;color:#1a1a1a;">OFF</div><div class="r" style="left:1684px;top:371px;width:223px;height:33px;background:#a3b6c6;"></div><svg style="left:1785px;top:376px" width="22" height="22" viewBox="0 0 28 28"><circle cx="14" cy="14" r="12" fill="#f2f4f7"/><circle cx="14" cy="14" r="5" fill="#a3b6c6"/><path d="M14 2 L10 12 M26 14 L16 10 M14 26 L18 16 M2 14 L12 18 M22 5 L13 9 M6 23 L15 19" stroke="#a3b6c6" stroke-width="1.8"/></svg><div class="r" style="left:1665px;top:412px;width:256px;height:20px;background:#11385b;"></div><div class="t" style="left:1669px;top:417.79px;font-size:12.3px;color:#ffffff;-webkit-text-stroke:0.45px #ffffff;">Séquence</div><svg style="left:1905.8px;top:416.2px" width="12" height="12"><path d="M0 0 L12 12 M12 0 L0 12" stroke="#c9d9e7" stroke-width="0.95"/></svg><div class="r" style="left:1665px;top:432px;width:256px;height:350px;background:#ffffff;"></div><div class="r" style="left:1665px;top:432px;width:1px;height:350px;background:#7fa3bd;"></div><div class="r" style="left:1909px;top:434px;width:5px;height:237px;background:#123c61;border-radius:3px;"></div><div class="r" style="left:1678px;top:438px;width:214px;height:31px;background:#ffffff;border:1px solid #cfd6dc;box-sizing:border-box;"></div><div class="r" style="left:1679px;top:439px;width:26px;height:29px;background:#557a95;"></div><div class="t" style="left:1585px;width:400px;text-align:center;top:447.73px;font-size:14.5px;color:#1a1a1a;">1 / 8</div><div class="t" style="left:1678px;top:486.73px;font-size:14.5px;color:#1a1a1a;">Heure de fin estimée (cette cible)</div><div class="t" style="left:1678px;top:506.73px;font-size:14.5px;color:#1a1a1a;">Heure de fin estimée</div><div class="t" style="left:1678px;top:535.68px;font-size:24px;color:#1a1a1a;width:214px;overflow:hidden;padding-bottom:4px;">Détails de la séquence</div><div class="r" style="left:1678px;top:563px;width:214px;height:1px;background:#d0d0d0;"></div><div class="r" style="left:1702px;top:578px;width:165px;height:31px;background:#ffffff;border:1px solid #cfd6dc;box-sizing:border-box;"></div><div class="r" style="left:1703px;top:579px;width:11px;height:29px;background:#557a95;"></div><div class="t" style="left:1585px;width:400px;text-align:center;top:586.73px;font-size:14.5px;color:#1a1a1a;">1 / 15</div><div class="t" style="left:1697px;top:625.53px;font-size:14.5px;color:#1a1a1a;width:88px;overflow:hidden;padding-bottom:4px;">Cible</div><div class="t" style="left:1791.5px;top:625.53px;font-size:14.5px;color:#1a1a1a;width:82px;overflow:hidden;padding-bottom:4px;">NGC 2685-C...</div><div class="t" style="left:1697px;top:652.03px;font-size:14.5px;color:#1a1a1a;width:88px;overflow:hidden;padding-bottom:4px;">Mode</div><div class="t" style="left:1791.5px;top:652.03px;font-size:14.5px;color:#1a1a1a;width:82px;overflow:hidden;padding-bottom:4px;">Une après l'autre</div><div class="t" style="left:1697px;top:677.93px;font-size:14.5px;color:#1a1a1a;width:88px;overflow:hidden;padding-bottom:4px;">Temps Exposition</div><div class="t" style="left:1791.5px;top:677.93px;font-size:14.5px;color:#1a1a1a;width:82px;overflow:hidden;padding-bottom:4px;">60 s</div><div class="t" style="left:1697px;top:703.83px;font-size:14.5px;color:#1a1a1a;width:88px;overflow:hidden;padding-bottom:4px;">Type</div><div class="t" style="left:1791.5px;top:703.83px;font-size:14.5px;color:#1a1a1a;width:82px;overflow:hidden;padding-bottom:4px;">LIGHT</div><div class="t" style="left:1697px;top:729.73px;font-size:14.5px;color:#1a1a1a;width:88px;overflow:hidden;padding-bottom:4px;">Filtre</div><div class="t" style="left:1791.5px;top:729.73px;font-size:14.5px;color:#1a1a1a;width:82px;overflow:hidden;padding-bottom:4px;">L</div><div class="t" style="left:1697px;top:755.73px;font-size:14.5px;color:#1a1a1a;width:88px;overflow:hidden;padding-bottom:4px;">Binning</div><div class="t" style="left:1791.5px;top:755.73px;font-size:14.5px;color:#1a1a1a;width:82px;overflow:hidden;padding-bottom:4px;">1x1</div><div class="r" style="left:1665px;top:791px;width:256px;height:20px;background:#11385b;"></div><div class="t" style="left:1669px;top:796.79px;font-size:12.3px;color:#ffffff;-webkit-text-stroke:0.45px #ffffff;">Historique Image</div><svg style="left:1905.8px;top:795.2px" width="12" height="12"><path d="M0 0 L12 12 M12 0 L0 12" stroke="#c9d9e7" stroke-width="0.95"/></svg><div class="r" style="left:1665px;top:811px;width:256px;height:184px;background:#ffffff;"></div><div class="r" style="left:1665px;top:811px;width:1px;height:184px;background:#7fa3bd;"></div><div class="r" style="left:1668px;top:813px;width:162px;height:160px;background:#2d8fd6;"></div><div class="r" style="left:1670px;top:815px;width:158px;height:156px;background:#e8f3fb;"></div><div class="r" style="left:1671px;top:816px;width:156px;height:154px;background:#1f4f78;"></div><div class="r" style="left:1673px;top:818px;width:152px;height:150px;background:#2e2e2e;"></div><svg style="left:1673px;top:818px" width="152" height="150"><defs><radialGradient id="g2"><stop offset="0" stop-color="#dddddd"/><stop offset="1" stop-color="#555" stop-opacity="0"/></radialGradient></defs><ellipse cx="108" cy="70" rx="7" ry="3" fill="url(#g2)" transform="rotate(50 108 70)"/><circle cx="132" cy="27" r="1.4" fill="#777"/><circle cx="113" cy="114" r="1.4" fill="#888"/><circle cx="142" cy="128" r="1.4" fill="#888"/><rect x="140" y="0" width="12" height="150" fill="#252525"/></svg><div class="r" style="left:1677px;top:820px;width:67px;height:20px;background:#ffffff;"></div><div class="r" style="left:1748px;top:820px;width:37px;height:20px;background:#ffffff;"></div><div class="t" style="left:1679.5px;top:823.90px;font-size:14.3px;color:#1a1a1a;">Moyenne</div><div class="t" style="left:1750.5px;top:823.90px;font-size:14.3px;color:#1a1a1a;">3130</div><div class="r" style="left:1677px;top:840px;width:32px;height:20px;background:#ffffff;"></div><div class="r" style="left:1748px;top:840px;width:33px;height:20px;background:#ffffff;"></div><div class="t" style="left:1679.5px;top:844.10px;font-size:14.3px;color:#1a1a1a;">HFR</div><div class="t" style="left:1750.5px;top:844.10px;font-size:14.3px;color:#1a1a1a;">4.10</div><div class="r" style="left:1677px;top:860px;width:38px;height:21px;background:#ffffff;"></div><div class="r" style="left:1748px;top:860px;width:12px;height:21px;background:#ffffff;"></div><div class="t" style="left:1679.5px;top:864.30px;font-size:14.3px;color:#1a1a1a;">Filtre</div><div class="t" style="left:1750.5px;top:864.30px;font-size:14.3px;color:#1a1a1a;">L</div><div class="r" style="left:1677px;top:921px;width:45px;height:20px;background:#ffffff;"></div><div class="r" style="left:1748px;top:921px;width:47px;height:20px;background:#ffffff;"></div><div class="t" style="left:1679.5px;top:924.30px;font-size:14.3px;color:#1a1a1a;">Durée</div><div class="t" style="left:1750.5px;top:924.30px;font-size:14.3px;color:#1a1a1a;">60.00s</div><div class="r" style="left:1677px;top:941px;width:71px;height:22px;background:#ffffff;"></div><div class="r" style="left:1748px;top:941px;width:60px;height:22px;background:#ffffff;"></div><div class="t" style="left:1679.5px;top:946.20px;font-size:14.3px;color:#1a1a1a;width:68px;overflow:hidden;padding-bottom:4px;">Acquisition</div><div class="t" style="left:1750.5px;top:946.20px;font-size:14.3px;color:#1a1a1a;">21:01:16</div><div class="r" style="left:353px;top:779px;width:1304px;height:19px;background:#11385b;"></div><div class="t" style="left:357px;top:784.79px;font-size:12.3px;color:#ffffff;-webkit-text-stroke:0.45px #ffffff;">Guidage</div><svg style="left:1641.8px;top:783.2px" width="12" height="12"><path d="M0 0 L12 12 M12 0 L0 12" stroke="#c9d9e7" stroke-width="0.95"/></svg><svg style="left:1613px;top:784px" width="14" height="12" viewBox="0 0 14 12"><polygon points="9.38,5.92 9.21,6.75 7.83,6.96 7.50,7.47 7.83,8.82 7.13,9.29 6.00,8.47 5.40,8.59 4.68,9.78 3.85,9.61 3.64,8.23 3.13,7.90 1.78,8.23 1.31,7.53 2.13,6.40 2.01,5.80 0.82,5.08 0.99,4.25 2.37,4.04 2.70,3.53 2.37,2.18 3.07,1.71 4.20,2.53 4.80,2.41 5.52,1.22 6.35,1.39 6.56,2.77 7.07,3.10 8.42,2.77 8.89,3.47 8.07,4.60 8.19,5.20" fill="#f4f8fb"/><circle cx="5.1" cy="5.5" r="1.3" fill="#11385b"/><polygon points="13.28,2.74 13.10,3.39 12.13,3.50 11.80,3.83 11.69,4.80 11.04,4.98 10.47,4.18 10.01,4.06 9.12,4.46 8.64,3.98 9.04,3.09 8.92,2.63 8.12,2.06 8.30,1.41 9.27,1.30 9.60,0.97 9.71,-0.00 10.36,-0.18 10.93,0.62 11.39,0.74 12.28,0.34 12.76,0.82 12.36,1.71 12.48,2.17" fill="#f4f8fb"/><circle cx="10.7" cy="2.4" r="0.6" fill="#11385b"/><polygon points="13.28,9.24 13.10,9.89 12.13,10.00 11.80,10.33 11.69,11.30 11.04,11.48 10.47,10.68 10.01,10.56 9.12,10.96 8.64,10.48 9.04,9.59 8.92,9.13 8.12,8.56 8.30,7.91 9.27,7.80 9.60,7.47 9.71,6.50 10.36,6.32 10.93,7.12 11.39,7.24 12.28,6.84 12.76,7.32 12.36,8.21 12.48,8.67" fill="#f4f8fb"/><circle cx="10.7" cy="8.9" r="0.6" fill="#11385b"/></svg><div class="r" style="left:353px;top:798px;width:1304px;height:197px;background:#ffffff;"></div><div class="r" style="left:353px;top:798px;width:1px;height:197px;background:#7fa3bd;"></div><div class="t" style="left:361px;top:813.23px;font-size:14.5px;color:#1a1a1a;">État: Guiding</div><div class="t" style="left:452.4px;top:813.23px;font-size:14.5px;color:#1a1a1a;">AD : 0.14 (0.64")</div><div class="t" style="left:564px;top:813.23px;font-size:14.5px;color:#1a1a1a;">Dec: 0.14(0.62")</div><div class="t" style="left:673px;top:813.23px;font-size:14.5px;color:#1a1a1a;">Tot: 0.20(0.89")</div><svg style="left:0;top:0" width="1913" height="1015" viewBox="0 0 1913 1015"><rect x="397.5" y="855.5" width="1244" height="119.5" fill="none" stroke="#c8c8c8" stroke-width="1"/><path d="M397 870.3 H1641" stroke="#a3a3a3" stroke-width="1" stroke-dasharray="16 3.5"/><path d="M397 885.3 H1641" stroke="#a3a3a3" stroke-width="1" stroke-dasharray="16 3.5"/><path d="M397 900.3 H1641" stroke="#a3a3a3" stroke-width="1" stroke-dasharray="16 3.5"/><path d="M397 930.3 H1641" stroke="#a3a3a3" stroke-width="1" stroke-dasharray="16 3.5"/><path d="M397 945.3 H1641" stroke="#a3a3a3" stroke-width="1" stroke-dasharray="16 3.5"/><path d="M397 960.3 H1641" stroke="#a3a3a3" stroke-width="1" stroke-dasharray="16 3.5"/><path d="M389 855.3 H1641" stroke="#b4b4b4" stroke-width="1"/><path d="M389 975.3 H1641" stroke="#b4b4b4" stroke-width="1"/><path d="M389 855.3 H397" stroke="#777" stroke-width="0.9"/><path d="M392 858.3 H397" stroke="#777" stroke-width="0.9"/><path d="M392 861.3 H397" stroke="#777" stroke-width="0.9"/><path d="M392 864.3 H397" stroke="#777" stroke-width="0.9"/><path d="M392 867.3 H397" stroke="#777" stroke-width="0.9"/><path d="M389 870.3 H397" stroke="#777" stroke-width="0.9"/><path d="M392 873.3 H397" stroke="#777" stroke-width="0.9"/><path d="M392 876.3 H397" stroke="#777" stroke-width="0.9"/><path d="M392 879.3 H397" stroke="#777" stroke-width="0.9"/><path d="M392 882.3 H397" stroke="#777" stroke-width="0.9"/><path d="M389 885.3 H397" stroke="#777" stroke-width="0.9"/><path d="M392 888.3 H397" stroke="#777" stroke-width="0.9"/><path d="M392 891.3 H397" stroke="#777" stroke-width="0.9"/><path d="M392 894.3 H397" stroke="#777" stroke-width="0.9"/><path d="M392 897.3 H397" stroke="#777" stroke-width="0.9"/><path d="M389 900.3 H397" stroke="#777" stroke-width="0.9"/><path d="M392 903.3 H397" stroke="#777" stroke-width="0.9"/><path d="M392 906.3 H397" stroke="#777" stroke-width="0.9"/><path d="M392 909.3 H397" stroke="#777" stroke-width="0.9"/><path d="M392 912.3 H397" stroke="#777" stroke-width="0.9"/><path d="M389 915.3 H397" stroke="#777" stroke-width="0.9"/><path d="M392 918.3 H397" stroke="#777" stroke-width="0.9"/><path d="M392 921.3 H397" stroke="#777" stroke-width="0.9"/><path d="M392 924.3 H397" stroke="#777" stroke-width="0.9"/><path d="M392 927.3 H397" stroke="#777" stroke-width="0.9"/><path d="M389 930.3 H397" stroke="#777" stroke-width="0.9"/><path d="M392 933.3 H397" stroke="#777" stroke-width="0.9"/><path d="M392 936.3 H397" stroke="#777" stroke-width="0.9"/><path d="M392 939.3 H397" stroke="#777" stroke-width="0.9"/><path d="M392 942.3 H397" stroke="#777" stroke-width="0.9"/><path d="M389 945.3 H397" stroke="#777" stroke-width="0.9"/><path d="M392 948.3 H397" stroke="#777" stroke-width="0.9"/><path d="M392 951.3 H397" stroke="#777" stroke-width="0.9"/><path d="M392 954.3 H397" stroke="#777" stroke-width="0.9"/><path d="M392 957.3 H397" stroke="#777" stroke-width="0.9"/><path d="M389 960.3 H397" stroke="#777" stroke-width="0.9"/><path d="M392 963.3 H397" stroke="#777" stroke-width="0.9"/><path d="M392 966.3 H397" stroke="#777" stroke-width="0.9"/><path d="M392 969.3 H397" stroke="#777" stroke-width="0.9"/><path d="M392 972.3 H397" stroke="#777" stroke-width="0.9"/><path d="M389 975.3 H397" stroke="#777" stroke-width="0.9"/><path d="M397 855 V975" stroke="#888" stroke-width="1"/><rect x="418.3" y="915.3" width="3.5" height="33.0" fill="none" stroke="#1a1a8c" stroke-width="1"/><rect x="430.8" y="885.3" width="3.5" height="30.0" fill="none" stroke="#1a1a8c" stroke-width="1"/><rect x="481.0" y="915.3" width="3.5" height="33.0" fill="none" stroke="#1a1a8c" stroke-width="1"/><rect x="542.9" y="877.3" width="3.5" height="38.0" fill="none" stroke="#1a1a8c" stroke-width="1"/><rect x="555.3" y="915.3" width="3.5" height="33.0" fill="none" stroke="#1a1a8c" stroke-width="1"/><rect x="567.9" y="915.3" width="3.5" height="33.0" fill="none" stroke="#1a1a8c" stroke-width="1"/><rect x="593.0" y="862.3" width="3.5" height="53.0" fill="none" stroke="#1a1a8c" stroke-width="1"/><rect x="652.7" y="915.3" width="3.5" height="33.0" fill="none" stroke="#1a1a8c" stroke-width="1"/><rect x="655.1" y="915.3" width="3.5" height="33.0" fill="none" stroke="#1a1a8c" stroke-width="1"/><rect x="866.4" y="862.8" width="3.5" height="52.5" fill="none" stroke="#1a1a8c" stroke-width="1"/><rect x="940.9" y="877.9" width="3.5" height="37.4" fill="none" stroke="#1a1a8c" stroke-width="1"/><rect x="1078.1" y="915.3" width="3.5" height="32.1" fill="none" stroke="#1a1a8c" stroke-width="1"/><rect x="1265.0" y="856.5" width="3.5" height="58.8" fill="none" stroke="#1a1a8c" stroke-width="1"/><rect x="1289.2" y="883.5" width="3.5" height="31.8" fill="none" stroke="#1a1a8c" stroke-width="1"/><rect x="1388.5" y="885.0" width="3.5" height="30.3" fill="none" stroke="#1a1a8c" stroke-width="1"/><rect x="410.0" y="915.3" width="3.5" height="19.0" fill="none" stroke="#b44a4a" stroke-width="1"/><rect x="446.8" y="900.3" width="3.5" height="15.0" fill="none" stroke="#b44a4a" stroke-width="1"/><rect x="459.8" y="888.3" width="3.5" height="27.0" fill="none" stroke="#b44a4a" stroke-width="1"/><rect x="471.9" y="888.3" width="3.5" height="27.0" fill="none" stroke="#b44a4a" stroke-width="1"/><rect x="484.4" y="884.4" width="3.5" height="30.9" fill="none" stroke="#b44a4a" stroke-width="1"/><rect x="558.9" y="915.3" width="3.5" height="19.0" fill="none" stroke="#b44a4a" stroke-width="1"/><rect x="571.9" y="885.9" width="3.5" height="29.4" fill="none" stroke="#b44a4a" stroke-width="1"/><rect x="584.0" y="880.5" width="3.5" height="34.8" fill="none" stroke="#b44a4a" stroke-width="1"/><rect x="596.2" y="915.3" width="3.5" height="12.0" fill="none" stroke="#b44a4a" stroke-width="1"/><rect x="608.8" y="915.3" width="3.5" height="20.0" fill="none" stroke="#b44a4a" stroke-width="1"/><rect x="621.3" y="915.3" width="3.5" height="19.0" fill="none" stroke="#b44a4a" stroke-width="1"/><rect x="646.0" y="915.3" width="3.5" height="19.0" fill="none" stroke="#b44a4a" stroke-width="1"/><rect x="708.5" y="896.4" width="3.5" height="18.9" fill="none" stroke="#b44a4a" stroke-width="1"/><rect x="720.8" y="897.3" width="3.5" height="18.0" fill="none" stroke="#b44a4a" stroke-width="1"/><rect x="757.8" y="893.2" width="3.5" height="22.0" fill="none" stroke="#b44a4a" stroke-width="1"/><rect x="782.9" y="883.3" width="3.5" height="32.0" fill="none" stroke="#b44a4a" stroke-width="1"/><rect x="808.0" y="896.4" width="3.5" height="18.9" fill="none" stroke="#b44a4a" stroke-width="1"/><rect x="883.1" y="899.5" width="3.5" height="15.8" fill="none" stroke="#b44a4a" stroke-width="1"/><rect x="1032.1" y="888.8" width="3.5" height="26.5" fill="none" stroke="#b44a4a" stroke-width="1"/><rect x="1119.1" y="894.9" width="3.5" height="20.4" fill="none" stroke="#b44a4a" stroke-width="1"/><rect x="1156.3" y="893.7" width="3.5" height="21.6" fill="none" stroke="#b44a4a" stroke-width="1"/><rect x="1193.9" y="915.3" width="3.5" height="21.3" fill="none" stroke="#b44a4a" stroke-width="1"/><rect x="1231.2" y="915.3" width="3.5" height="21.3" fill="none" stroke="#b44a4a" stroke-width="1"/><rect x="1380.5" y="897.6" width="3.5" height="17.7" fill="none" stroke="#b44a4a" stroke-width="1"/><rect x="1392.9" y="895.8" width="3.5" height="19.5" fill="none" stroke="#b44a4a" stroke-width="1"/><rect x="1404.7" y="874.9" width="3.5" height="40.4" fill="none" stroke="#b44a4a" stroke-width="1"/><path d="M397 915.3 H1430" stroke="#5b2a6a" stroke-width="1"/><polyline points="397.3,903.6 409.7,905.5 422.2,899.5 434.6,929.7 447.1,921.3 459.5,911.4 472.0,911.4 484.4,896.1 496.8,917.7 509.3,925.5 521.7,924.0 534.2,927.9 546.6,931.8 559.0,894.1 571.5,899.2 583.9,924.8 596.4,938.8 608.8,925.5 621.3,916.0 633.7,915.3 646.1,902.2 658.6,895.3 671.0,924.3 683.5,924.8 695.9,918.0 708.4,918.8 720.8,924.8 733.2,914.5 745.7,920.1 758.1,913.2 770.6,922.2 783.0,909.0 795.4,915.3 807.9,916.5 820.3,924.3 832.8,926.7 845.2,928.9 857.7,927.3 870.1,939.1 882.5,928.3 895.0,926.7 907.4,923.1 919.9,919.0 932.3,929.2 944.7,932.2 957.2,916.5 969.6,918.4 982.1,916.5 994.5,921.1 1007.0,923.1 1019.4,910.3 1031.8,906.0 1044.3,914.4 1056.7,913.5 1069.2,913.5 1081.6,902.5 1094.1,915.0 1106.5,916.8 1118.9,915.9 1131.4,925.8 1143.8,919.6 1156.3,922.6 1168.7,922.0 1181.1,919.6 1193.6,927.6 1206.0,926.7 1218.5,916.5 1230.9,923.7 1243.4,923.7 1255.8,929.8 1268.2,941.5 1280.7,922.6 1293.1,929.8 1305.6,921.1 1318.0,914.4 1330.5,911.8 1342.9,916.0 1355.3,924.0 1367.8,928.6 1380.2,923.7 1392.7,929.2 1405.1,929.2 1417.5,919.0 1430.0,922.0" fill="none" stroke="#1010d0" stroke-width="2.3" stroke-linejoin="miter"/><polyline points="397.3,915.3 409.7,903.6 422.2,916.8 434.6,911.1 447.1,925.5 459.5,933.8 472.0,932.5 484.4,935.4 496.8,915.0 509.3,921.6 521.7,913.8 534.2,924.0 546.6,921.3 559.0,903.6 571.5,936.4 583.9,938.5 596.4,905.8 608.8,903.0 621.3,904.0 633.7,915.3 646.1,902.8 658.6,911.1 671.0,918.8 683.5,916.6 695.9,922.8 708.4,929.1 720.8,927.0 733.2,916.0 745.7,920.8 758.1,931.2 770.6,924.3 783.0,937.3 795.4,923.5 807.9,929.8 820.3,910.6 832.8,906.6 845.2,916.8 857.7,914.4 870.1,920.5 882.5,928.3 895.0,913.8 907.4,908.8 919.9,914.4 932.3,916.5 944.7,919.9 957.2,917.4 969.6,920.5 982.1,921.1 994.5,921.4 1007.0,922.0 1019.4,926.1 1031.8,933.9 1044.3,912.1 1056.7,913.8 1069.2,913.8 1081.6,913.8 1094.1,917.4 1106.5,923.7 1118.9,930.4 1131.4,921.1 1143.8,921.1 1156.3,931.3 1168.7,912.9 1181.1,906.6 1193.6,901.9 1206.0,913.8 1218.5,913.8 1230.9,902.5 1243.4,912.1 1255.8,915.9 1268.2,920.5 1280.7,922.6 1293.1,921.4 1305.6,924.3 1318.0,923.1 1330.5,922.3 1342.9,920.2 1355.3,919.9 1367.8,910.6 1380.2,929.2 1392.7,929.2 1405.1,943.2 1417.5,911.5 1430.0,910.3" fill="none" stroke="#e01a1a" stroke-width="2.3" stroke-linejoin="miter"/><rect x="407.5" y="943.5" width="502" height="22" fill="#ffffff" stroke="#d8d8d8" stroke-width="1"/><rect x="409.5" y="948.5" width="13" height="13" fill="none" stroke="#1a1acc" stroke-width="1.3"/><rect x="563.5" y="948.5" width="13" height="13" fill="none" stroke="#d02020" stroke-width="1.3"/><path d="M721 954.5 H736" stroke="#1010d0" stroke-width="3"/><path d="M787 954.5 H801" stroke="#e01a1a" stroke-width="3"/><path d="M855 959 L861 949 L867 959 Z" fill="#111"/></svg><div class="t" style="left:427.5px;top:949.00px;font-size:13px;color:#1a1a1a;">Corrections en AD</div><div class="t" style="left:581px;top:949.00px;font-size:13px;color:#1a1a1a;">Corrections en Dec</div><div class="t" style="left:740px;top:949.00px;font-size:13px;color:#1a1a1a;">AD</div><div class="t" style="left:804px;top:949.00px;font-size:13px;color:#1a1a1a;">Dec</div><div class="t" style="left:872px;top:949.00px;font-size:13px;color:#1a1a1a;">Dither</div><div class="t" style="right:1529.5px;top:848.96px;font-size:16px;color:#1a1a1a;">4</div><div class="t" style="right:1529.5px;top:863.96px;font-size:16px;color:#1a1a1a;">3</div><div class="t" style="right:1529.5px;top:878.96px;font-size:16px;color:#1a1a1a;">2</div><div class="t" style="right:1529.5px;top:893.96px;font-size:16px;color:#1a1a1a;">1</div><div class="t" style="right:1529.5px;top:908.96px;font-size:16px;color:#1a1a1a;">0</div><div class="t" style="right:1529.5px;top:923.96px;font-size:16px;color:#1a1a1a;">-1</div><div class="t" style="right:1529.5px;top:938.96px;font-size:16px;color:#1a1a1a;">-2</div><div class="t" style="right:1529.5px;top:953.96px;font-size:16px;color:#1a1a1a;">-3</div><div class="t" style="right:1529.5px;top:968.96px;font-size:16px;color:#1a1a1a;">-4</div><div class="t" style="right:287px;top:860.30px;font-size:15px;color:#1a1a1a;">GuideNorth</div><div class="t" style="right:287px;top:958.64px;font-size:14.6px;color:#1a1a1a;">GuideEast</div><div class="r" style="left:0px;top:996.5px;width:1913px;height:1.6px;background:#86a8c0;"></div><div class="r" style="left:95px;top:998px;width:1818px;height:17px;background:#ffffff;"></div><div class="t" style="left:102.5px;top:1007.23px;font-size:14.5px;color:#1a1a1a;">Acquisition :</div><div class="t" style="left:197.5px;top:1006.97px;font-size:14.8px;color:#1a1a1a;">Acquisition en cour 00:10 / 01:00</div><div class="r" style="left:426px;top:1003px;width:124px;height:14px;background:#ffffff;border:1px solid #c8c8c8;box-sizing:border-box;"></div><div class="r" style="left:427px;top:1004px;width:21px;height:12px;background:#557a95;"></div><div class="t" style="left:289px;width:400px;text-align:center;top:1006.73px;font-size:14.5px;color:#1a1a1a;">17%</div><div class="r" style="left:583px;top:1000px;width:1px;height:15px;background:#d0d0d0;"></div>
</body></html>
